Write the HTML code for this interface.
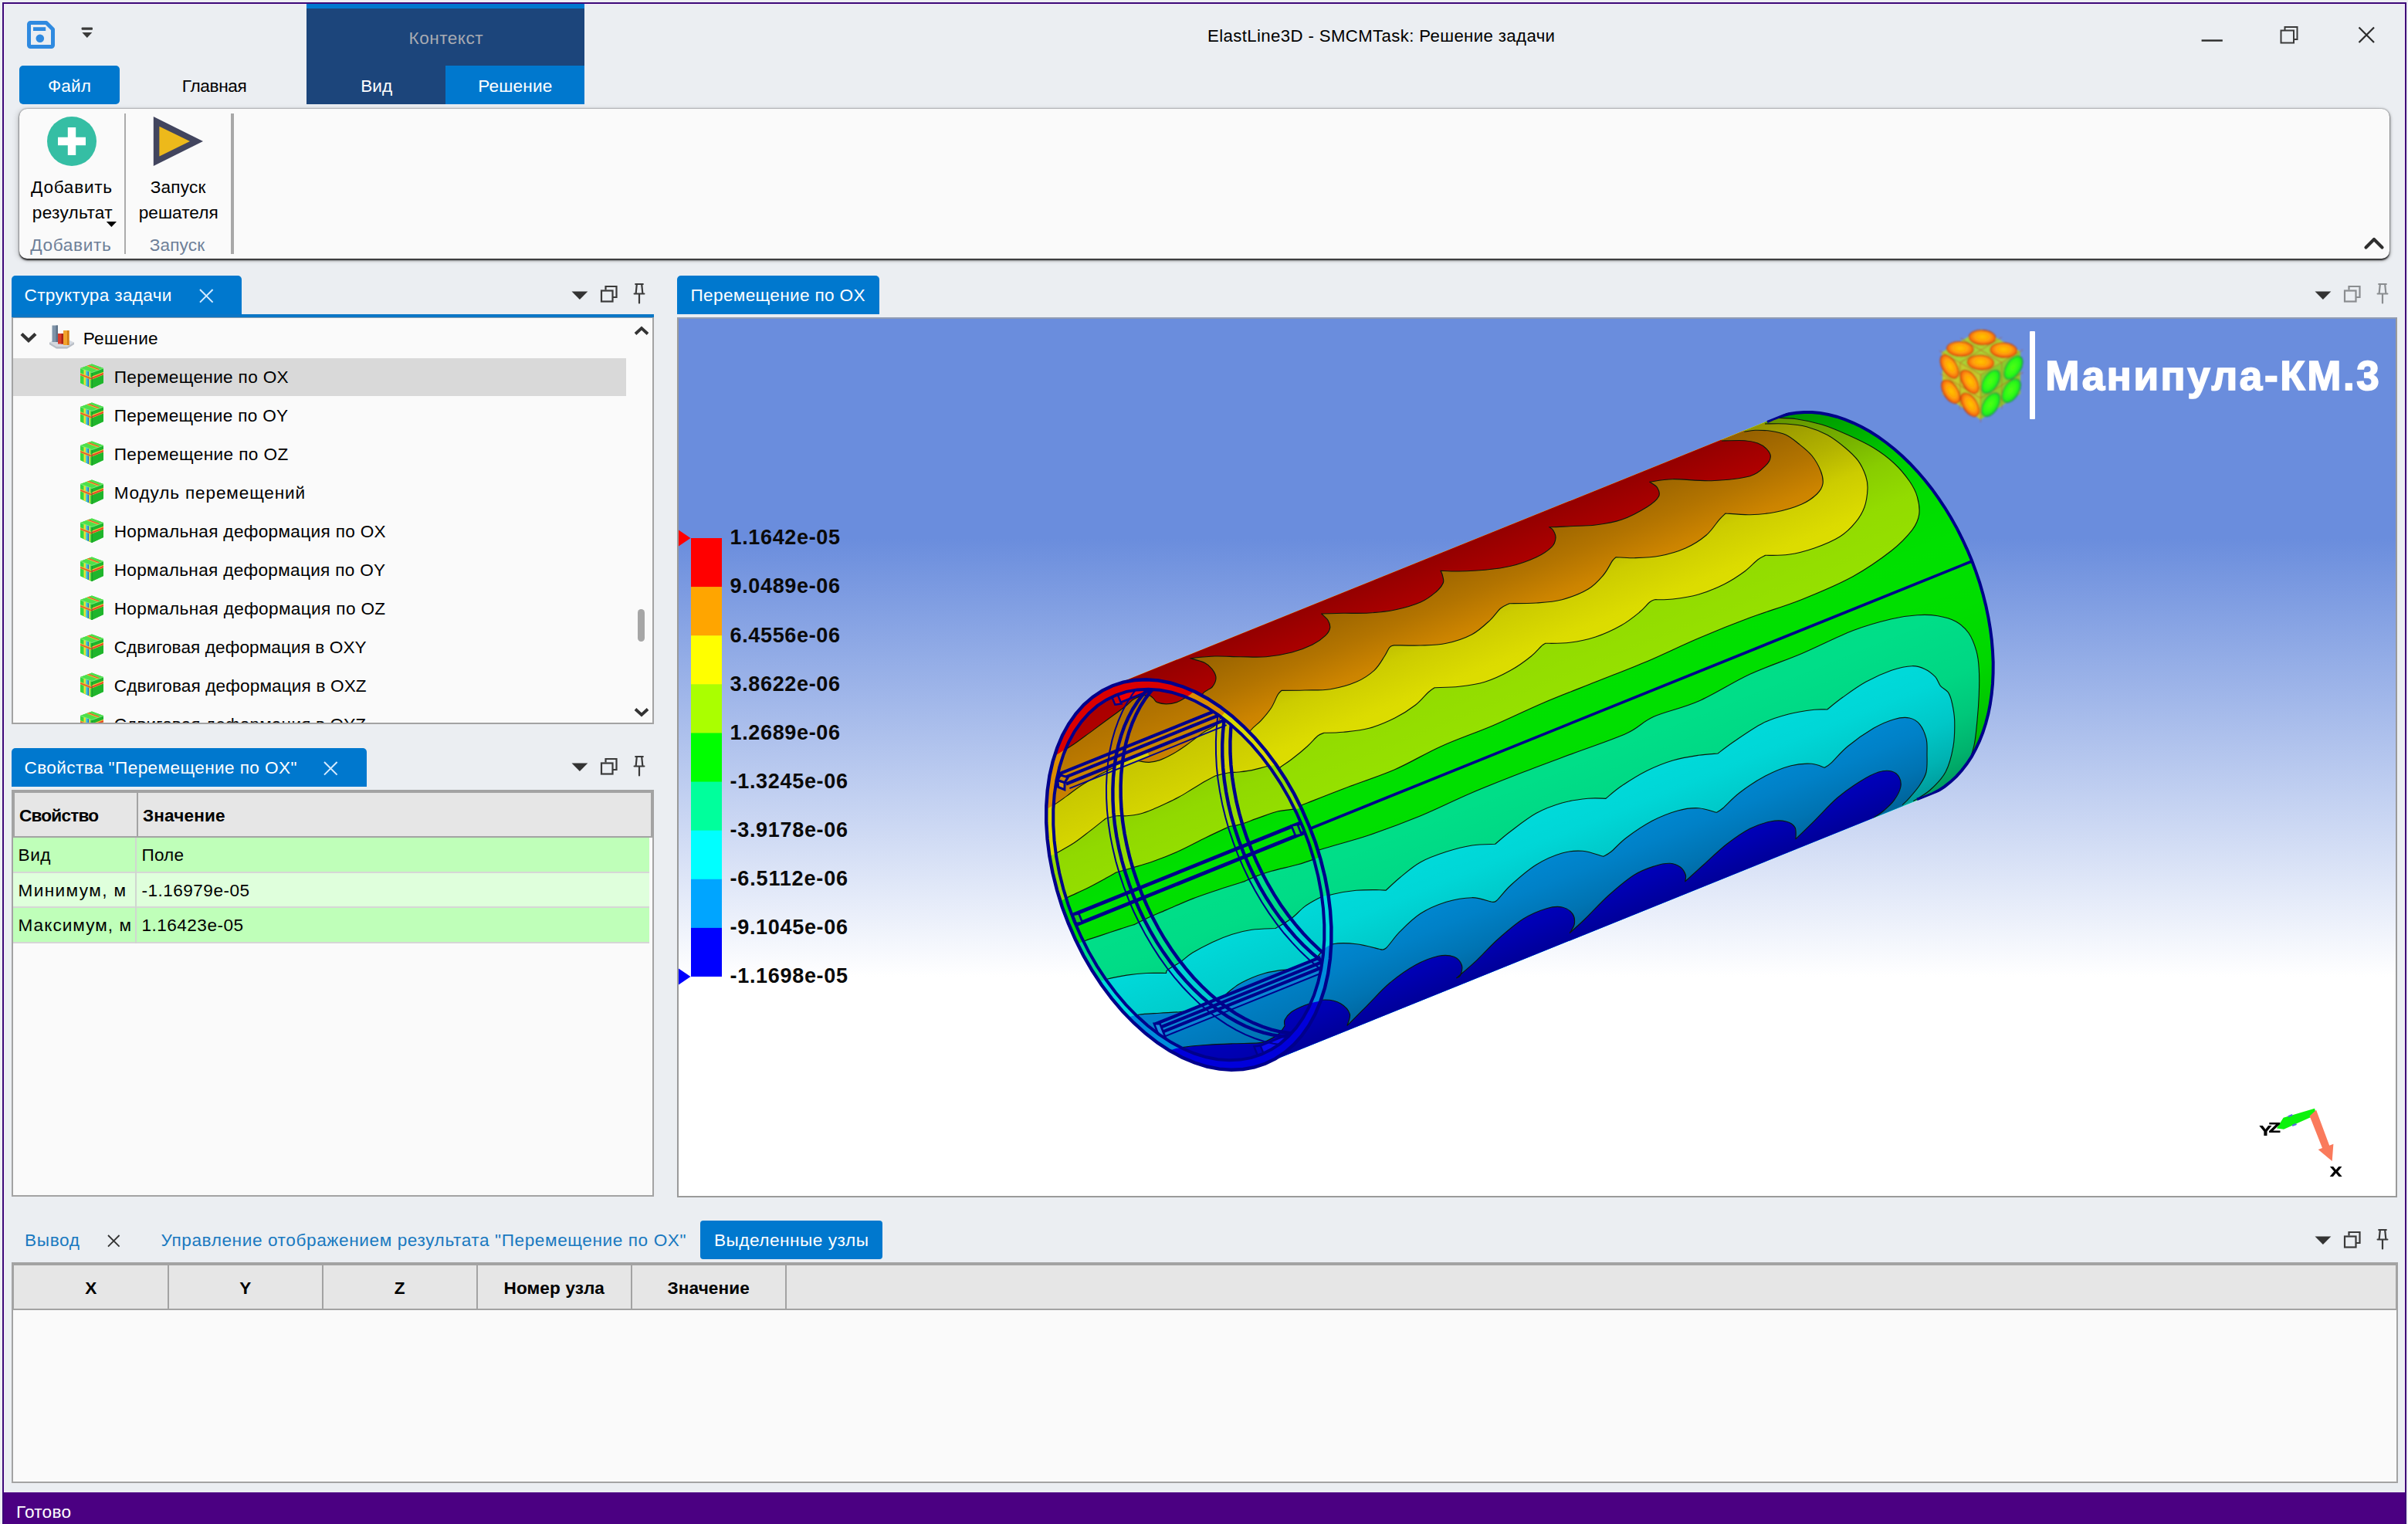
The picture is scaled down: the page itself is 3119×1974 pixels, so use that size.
<!DOCTYPE html>
<html lang="ru"><head><meta charset="utf-8"><title>ElastLine3D - SMCMTask: Решение задачи</title>
<style>
html,body{margin:0;padding:0;background:#eeeff4;}
body{width:3119px;height:1974px;font-family:"Liberation Sans",sans-serif;}
#app{position:relative;width:3119px;height:1974px;overflow:hidden;background:#eeeff4;}
#app div,#app svg,#app span.t{position:absolute;}
#app div{box-sizing:border-box;}
span.t{white-space:pre;line-height:40px;height:40px;}

</style></head>
<body>
<div id="app">
<!-- 10_frame.py -->
<div style="left:3px;top:3px;width:3114px;height:1971px;background:#ebeef2;border:2px solid #3c0a78;border-bottom:none;box-shadow:inset 1px 1px 0 #f6e6fa,inset -1px 0 0 #f6e6fa;"></div>
<div style="left:397px;top:5px;width:360px;height:130px;background:#1c457b;border-top:6px solid #0078ce;"></div>
<div style="left:577px;top:85px;width:180px;height:50px;background:#0078ce;"></div>
<span class="t" style="left:529.60px;top:29.86px;font-size:22.6px;color:#a8abb2;letter-spacing:0.478px;">Контекст</span>
<span class="t" style="left:467.20px;top:92.26px;font-size:22.6px;color:#fff;letter-spacing:0.062px;">Вид</span>
<span class="t" style="left:619.30px;top:92.26px;font-size:22.6px;color:#fff;letter-spacing:0.167px;">Решение</span>
<div style="left:25px;top:85px;width:130px;height:50px;background:#0078ce;border-radius:5px;"></div>
<span class="t" style="left:62.00px;top:92.26px;font-size:22.6px;color:#fff;letter-spacing:0.151px;">Файл</span>
<span class="t" style="left:235.80px;top:92.26px;font-size:22.6px;color:#000;letter-spacing:-0.333px;">Главная</span>
<svg style="left:30px;top:22px;" width="46" height="46" viewBox="0 0 46 46"><path d="M7.5 9.5a2 2 0 0 1 2-2h20.5l8.5 8.5v20.500a2 2 0 0 1-2 2h-27a2 2 0 0 1-2-2z" fill="none" stroke="#2f8ae0" stroke-width="5" stroke-linejoin="round"/><rect x="13" y="13.2" width="16.2" height="4.8" fill="#2f8ae0"/><circle cx="21.8" cy="27.8" r="5.3" fill="#2f8ae0"/></svg>
<svg style="left:100px;top:30px;" width="26" height="24" viewBox="0 0 26 24"><rect x="5.6" y="5.6" width="14.4" height="3.2" rx="1" fill="#3a3a3a"/><path d="M6.3 11.9h13l-6.500 7.100z" fill="#3a3a3a"/></svg>
<span class="t" style="left:1564.00px;top:26.86px;font-size:22.2px;color:#000;letter-spacing:0.383px;">ElastLine3D - SMCMTask: Решение задачи</span>
<svg style="left:2840px;top:24px;" width="250" height="44" viewBox="0 0 250 44"><rect x="11.600" y="27.300" width="27.200" height="2.400" fill="#2b2b2b"/><path d="M119.500 15.500v-4.500h16v16h-4.500" fill="none" stroke="#3a3a3a" stroke-width="2"/><rect x="114.500" y="15.500" width="16.500" height="16" fill="none" stroke="#3a3a3a" stroke-width="2"/><path d="M215.500 11.500l19.500 19.500M235 11.500l-19.500 19.500" fill="none" stroke="#2b2b2b" stroke-width="2.200"/></svg>
<div style="left:25px;top:141px;width:3070px;height:194px;background:#fafafa;border-radius:10px;box-shadow:0 1.500px 2px rgba(0,0,0,.78),1px 2px 4px rgba(0,0,0,.35),-3px 1px 7px rgba(0,0,0,.13),0 -1px 2px rgba(0,0,0,.16);"></div>
<svg style="left:59px;top:149px;" width="68" height="68" viewBox="0 0 68 68"><circle cx="34" cy="34" r="32" fill="#35bea4"/><path d="M28.800 16h10.400v12.800h12.800v10.400h-12.800v12.800h-10.400v-12.800h-12.800v-10.400h12.800z" fill="#fff"/></svg>
<svg style="left:196px;top:149px;" width="70" height="68" viewBox="0 0 70 68"><path d="M2.800 2l64.200 32l-64.200 32z" fill="#42455e"/><path d="M10.400 14.700l39.600 19.300l-39.600 19.400z" fill="#edb91b"/></svg>
<span class="t" style="left:40.10px;top:223.26px;font-size:22.6px;color:#000;letter-spacing:0.734px;">Добавить</span>
<span class="t" style="left:41.85px;top:255.66px;font-size:22.6px;color:#000;letter-spacing:0.306px;">результат</span>
<svg style="left:136px;top:285px;" width="18" height="12" viewBox="0 0 18 12"><path d="M1.800 2h13.200l-6.600 7z" fill="#000"/></svg>
<span class="t" style="left:39.15px;top:298.06px;font-size:22.6px;color:#6e8098;letter-spacing:0.692px;">Добавить</span>
<span class="t" style="left:194.75px;top:223.26px;font-size:22.6px;color:#000;letter-spacing:0.206px;">Запуск</span>
<span class="t" style="left:179.70px;top:255.66px;font-size:22.6px;color:#000;letter-spacing:0.049px;">решателя</span>
<span class="t" style="left:193.65px;top:298.06px;font-size:22.6px;color:#6e8098;letter-spacing:0.166px;">Запуск</span>
<div style="left:161px;top:147px;width:2px;height:182px;background:#ababab;"></div>
<div style="left:299px;top:147px;width:4px;height:182px;background:#a8a8a8;"></div>
<svg style="left:3058px;top:302px;" width="34" height="26" viewBox="0 0 34 26"><path d="M6.500 18.500l10.500-10.500l10.500 10.500" fill="none" stroke="#2e2e2e" stroke-width="4.200" stroke-linecap="round" stroke-linejoin="round"/></svg>
<div style="left:5px;top:1933px;width:3110px;height:41px;background:#4b0082;"></div>
<span class="t" style="left:21.00px;top:1938.76px;font-size:22.6px;color:#fff;letter-spacing:0.244px;">Готово</span>
<!-- 20_left.py -->
<svg width="0" height="0" style="left:0;top:0"><defs>
<linearGradient id="cgT" x1="0" y1="0" x2="1" y2="0"><stop offset="0" stop-color="#36d23c"/><stop offset="1" stop-color="#2fc636"/></linearGradient>
<symbol id="cube" viewBox="0 0 34 34">
 <path d="M17 1.500l15 5.500v19l-15 7l-15-7v-19z" fill="#2fd23a"/>
 <path d="M2 7l15 5.500v20.500l-15-7z" fill="#35d840"/>
 <path d="M17 12.500l15-5.500v19l-15 7z" fill="#1fb52c"/>
 <path d="M2 7l15-5.500l15 5.500l-15 5.500z" fill="#4fe04a"/>
 <path d="M6.500 8.700l2.800 1v19.800l-2.800-1.300z" fill="#e8e23a"/>
 <path d="M9.300 9.700l2.300 0.800v20l-2.300-1z" fill="#46c9e8"/>
 <path d="M11.600 10.500l1.800 0.700v20.100l-1.800-0.800z" fill="#2d6de0"/>
 <path d="M13.400 11.200l1.600 0.600v20.200l-1.600-0.700z" fill="#e8e23a"/>
 <path d="M17 17.500l15-5.800v3.800l-15 6.100z" fill="#f0c23a"/>
 <path d="M17 18.900l15-5.800v2l-15 6z" fill="#e6402c"/>
 <path d="M2 13l15 5.700v3.800l-15-6z" fill="#f0c23a" opacity=".85"/>
 <path d="M2 14.200l15 5.800v1.700l-15-6z" fill="#e6402c" opacity=".85"/>
 <path d="M10 4l14.500 5.600l3.200-1.200l-14.500-5.500z" fill="#f0c23a"/>
 <path d="M11.500 3.500l14.500 5.600l1.300-0.500l-14.500-5.500z" fill="#e6402c"/>
 <path d="M17 12.500v20.500" stroke="#177a22" stroke-width=".8" fill="none"/>
 <path d="M2 7l15 5.500l15-5.500" stroke="#8af08a" stroke-width=".8" fill="none"/>
</symbol>
<symbol id="icoTri" viewBox="0 0 24 14"><path d="M1.500 1.500h20.800l-10.400 10.600z" fill="#333"/></symbol>
<symbol id="icoRest" viewBox="0 0 24 24"><path d="M7.500 6.500v-4.500h14v14h-4.500" fill="none" stroke-width="2.200"/><rect x="2" y="7.500" width="14.500" height="14" fill="none" stroke-width="2.200"/></symbol>
<symbol id="icoPin" viewBox="0 0 20 28"><path d="M5.200 2h9.600M6.800 2.500l-1.200 12M13.200 2.500l1.200 12M3.600 14.500h12.800M10 15v11.500" fill="none" stroke-width="2.200" stroke-linecap="round"/></symbol>
</defs></svg>
<div style="left:15px;top:357px;width:298px;height:54px;background:#0078ce;border-radius:5px 5px 0 0;"></div>
<div style="left:15px;top:407px;width:832px;height:4.5px;background:#0a76c6;"></div>
<span class="t" style="left:31.50px;top:363.06px;font-size:22.6px;color:#fff;letter-spacing:0.330px;">Структура задачи</span>
<svg style="left:256.5px;top:372.9px;" width="20.6" height="20.6" viewBox="0 0 20.6 20.6"><path d="M2 2l16.6 16.6M18.6 2l-16.6 16.6" stroke="#d6ebff" stroke-width="2" fill="none"/></svg>
<svg style="left:739px;top:375.6px;" width="24" height="14" viewBox="0 0 24 14"><use href="#icoTri"/></svg><svg style="left:777.3px;top:369.3px;" width="24" height="24" viewBox="0 0 24 24"><use href="#icoRest" stroke="#3a3a3a"/></svg><svg style="left:817.5px;top:366.3px;" width="20" height="28" viewBox="0 0 20 28"><use href="#icoPin" stroke="#3a3a3a"/></svg>
<div style="left:15px;top:411px;width:832px;height:527px;background:#fafafa;border:2px solid #a3a3a3;border-top:1.500px solid #8f9fae;overflow:hidden;"></div>
<div style="left:17px;top:463.5px;width:794px;height:49px;background:#d9d9d9;"></div>
<svg style="left:24px;top:426px;" width="26" height="22" viewBox="0 0 26 22"><path d="M4 6.500l9 8.500l9-8.500" fill="none" stroke="#333" stroke-width="4.400" stroke-linejoin="miter"/></svg>
<svg style="left:62px;top:419px;" width="36" height="36" viewBox="0 0 36 36"><path d="M2 24.500l7-3.500h17l8 3.500v2.500l-9 5.500h-14l-9-5.500z" fill="#d4d8de"/><path d="M2 24.500l9 5.500h14l9-5.500v2.500l-9 5.500h-14l-9-5.500z" fill="#b9bec6"/><rect x="5.500" y="2.500" width="7.500" height="21.500" fill="#7f93a8"/><rect x="10.500" y="2.500" width="2.500" height="21.500" fill="#5f7388"/><rect x="13" y="13" width="7" height="13.500" fill="#d93a2a"/><rect x="17.500" y="13" width="2.500" height="13.500" fill="#a82218"/><rect x="20" y="9" width="7.500" height="19" fill="#f2a32c"/><rect x="25" y="9" width="2.500" height="19" fill="#d27d12"/></svg>
<span class="t" style="left:107.70px;top:418.96px;font-size:22.6px;color:#000;letter-spacing:0.333px;">Решение</span>
<div style="left:17px;top:412px;width:794px;height:524px;overflow:hidden;"><div style="left:-17px;top:-412px;width:900px;height:1000px;"><svg style="left:102px;top:469.9px;" width="34" height="34" viewBox="0 0 34 34"><use href="#cube"/></svg>
<span class="t" style="left:147.70px;top:468.96px;font-size:22.6px;color:#000;letter-spacing:0.337px;">Перемещение по OX</span>
<svg style="left:102px;top:519.9px;" width="34" height="34" viewBox="0 0 34 34"><use href="#cube"/></svg>
<span class="t" style="left:147.70px;top:518.96px;font-size:22.6px;color:#000;letter-spacing:0.306px;">Перемещение по OY</span>
<svg style="left:102px;top:569.9px;" width="34" height="34" viewBox="0 0 34 34"><use href="#cube"/></svg>
<span class="t" style="left:147.70px;top:568.96px;font-size:22.6px;color:#000;letter-spacing:0.385px;">Перемещение по OZ</span>
<svg style="left:102px;top:619.9px;" width="34" height="34" viewBox="0 0 34 34"><use href="#cube"/></svg>
<span class="t" style="left:147.70px;top:618.96px;font-size:22.6px;color:#000;letter-spacing:0.852px;">Модуль перемещений</span>
<svg style="left:102px;top:669.9px;" width="34" height="34" viewBox="0 0 34 34"><use href="#cube"/></svg>
<span class="t" style="left:147.70px;top:668.96px;font-size:22.6px;color:#000;letter-spacing:0.330px;">Нормальная деформация по OX</span>
<svg style="left:102px;top:719.9px;" width="34" height="34" viewBox="0 0 34 34"><use href="#cube"/></svg>
<span class="t" style="left:147.70px;top:718.96px;font-size:22.6px;color:#000;letter-spacing:0.311px;">Нормальная деформация по OY</span>
<svg style="left:102px;top:769.9px;" width="34" height="34" viewBox="0 0 34 34"><use href="#cube"/></svg>
<span class="t" style="left:147.70px;top:768.96px;font-size:22.6px;color:#000;letter-spacing:0.359px;">Нормальная деформация по OZ</span>
<svg style="left:102px;top:819.9px;" width="34" height="34" viewBox="0 0 34 34"><use href="#cube"/></svg>
<span class="t" style="left:147.70px;top:818.96px;font-size:22.6px;color:#000;letter-spacing:0.084px;">Сдвиговая деформация в OXY</span>
<svg style="left:102px;top:869.9px;" width="34" height="34" viewBox="0 0 34 34"><use href="#cube"/></svg>
<span class="t" style="left:147.70px;top:868.96px;font-size:22.6px;color:#000;letter-spacing:0.134px;">Сдвиговая деформация в OXZ</span>
<svg style="left:102px;top:919.9px;" width="34" height="34" viewBox="0 0 34 34"><use href="#cube"/></svg>
<span class="t" style="left:147.70px;top:918.96px;font-size:22.6px;color:#000;letter-spacing:0.114px;">Сдвиговая деформация в OYZ</span></div></div>
<svg style="left:818px;top:419px;" width="26" height="20" viewBox="0 0 26 20"><path d="M5 13.500l8-7.500l8 7.500" fill="none" stroke="#333" stroke-width="3.800"/></svg>
<svg style="left:818px;top:913px;" width="26" height="20" viewBox="0 0 26 20"><path d="M5 5.500l8 7.500l8-7.500" fill="none" stroke="#333" stroke-width="3.800"/></svg>
<div style="left:825.5px;top:789px;width:9.5px;height:42px;background:#a6a6a6;border-radius:4.500px;"></div>
<div style="left:15px;top:969px;width:460px;height:50px;background:#0078ce;border-radius:5px 5px 0 0;"></div>
<span class="t" style="left:31.50px;top:974.86px;font-size:22.6px;color:#fff;letter-spacing:0.402px;">Свойства "Перемещение по OX"</span>
<svg style="left:418.2px;top:984.7px;" width="20.6" height="20.6" viewBox="0 0 20.6 20.6"><path d="M2 2l16.6 16.6M18.6 2l-16.6 16.6" stroke="#d6ebff" stroke-width="2" fill="none"/></svg>
<svg style="left:739px;top:987.3px;" width="24" height="14" viewBox="0 0 24 14"><use href="#icoTri"/></svg><svg style="left:777.3px;top:981px;" width="24" height="24" viewBox="0 0 24 24"><use href="#icoRest" stroke="#3a3a3a"/></svg><svg style="left:817.5px;top:978px;" width="20" height="28" viewBox="0 0 20 28"><use href="#icoPin" stroke="#3a3a3a"/></svg>
<div style="left:15px;top:1023px;width:832px;height:527px;background:#fafafa;border:2px solid #a3a3a3;"></div>
<div style="left:15px;top:1023px;width:832px;height:62px;background:#e6e6e6;border:4px solid #a3a3a3;border-bottom-width:2px;"></div>
<div style="left:176.5px;top:1026px;width:2.5px;height:57px;background:#a3a3a3;"></div>
<span class="t" style="left:25.00px;top:1037.06px;font-size:22.6px;color:#000;font-weight:700;letter-spacing:-0.804px;">Свойство</span>
<span class="t" style="left:185.00px;top:1037.06px;font-size:22.6px;color:#000;font-weight:700;letter-spacing:0.129px;">Значение</span>
<div style="left:17px;top:1085px;width:824px;height:44px;background:#bfffb9;"></div>
<div style="left:17px;top:1128.5px;width:824px;height:2.2px;background:#d6d6d6;"></div>
<div style="left:174.5px;top:1085px;width:2px;height:45.7px;background:#d0d6d0;"></div>
<span class="t" style="left:23.50px;top:1087.96px;font-size:22.6px;color:#000;letter-spacing:0.562px;">Вид</span>
<span class="t" style="left:183.50px;top:1087.96px;font-size:22.6px;color:#000;letter-spacing:0.146px;">Поле</span>
<div style="left:17px;top:1130.7px;width:824px;height:44px;background:#dfffdc;"></div>
<div style="left:17px;top:1174.2px;width:824px;height:2.2px;background:#d6d6d6;"></div>
<div style="left:174.5px;top:1130.7px;width:2px;height:45.7px;background:#d0d6d0;"></div>
<span class="t" style="left:23.50px;top:1133.66px;font-size:22.6px;color:#000;letter-spacing:1.389px;">Минимум, м</span>
<span class="t" style="left:183.50px;top:1133.66px;font-size:22.6px;color:#000;letter-spacing:0.462px;">-1.16979e-05</span>
<div style="left:17px;top:1176.4px;width:824px;height:44px;background:#bfffb9;"></div>
<div style="left:17px;top:1219.9px;width:824px;height:2.2px;background:#d6d6d6;"></div>
<div style="left:174.5px;top:1176.4px;width:2px;height:45.7px;background:#d0d6d0;"></div>
<span class="t" style="left:23.50px;top:1179.36px;font-size:22.6px;color:#000;letter-spacing:1.034px;">Максимум, м</span>
<span class="t" style="left:183.50px;top:1179.36px;font-size:22.6px;color:#000;letter-spacing:0.459px;">1.16423e-05</span>
<!-- 30_view.py -->
<div style="left:877px;top:357px;width:262px;height:50px;background:#0078ce;border-radius:5px 5px 0 0;"></div>
<span class="t" style="left:894.50px;top:362.76px;font-size:22.6px;color:#fff;letter-spacing:0.337px;">Перемещение по OX</span>
<svg style="left:2997px;top:375.6px;" width="24" height="14" viewBox="0 0 24 14"><use href="#icoTri"/></svg><svg style="left:3035.3px;top:369.3px;" width="24" height="24" viewBox="0 0 24 24"><use href="#icoRest" stroke="#8a8d90"/></svg><svg style="left:3075.5px;top:366.3px;" width="20" height="28" viewBox="0 0 20 28"><use href="#icoPin" stroke="#8a8d90"/></svg>
<div style="left:877px;top:411px;width:2228px;height:1140px;background:linear-gradient(#6a8ddd 0,#6a8ddd 25%,#fff 75%,#fff 100%);border:2px solid #9a9a9a;border-top-color:#8f9bb5;"></div>
<svg style="left:1300px;top:480px" width="1340" height="960" viewBox="1300 480 1340 960">
<defs>
<clipPath id="cyOuter"><path d="M1440.9 888.2L2298.1 541.9L2308.5 538.3L2319.3 535.8L2330.4 534.3L2341.8 533.9L2353.5 534.6L2365.3 536.4L2377.3 539.3L2389.4 543.2L2401.4 548.1L2413.5 554.1L2425.5 561.1L2437.4 569.0L2449.1 577.9L2460.6 587.6L2471.8 598.3L2482.7 609.7L2493.2 621.9L2503.3 634.8L2513.0 648.3L2522.1 662.4L2530.7 677.1L2538.8 692.2L2546.2 707.8L2553.0 723.6L2559.2 739.8L2564.6 756.1L2569.3 772.6L2573.3 789.1L2576.5 805.7L2579.0 822.1L2580.7 838.4L2581.6 854.5L2581.7 870.2L2581.0 885.7L2579.5 900.7L2577.3 915.2L2574.2 929.1L2570.4 942.5L2565.9 955.2L2560.7 967.1L2554.7 978.3L2548.1 988.7L2540.8 998.2L2532.9 1006.8L2524.4 1014.4L2515.4 1021.1L2505.9 1026.8L2495.9 1031.5L1638.7 1377.8Z"/></clipPath>
<clipPath id="cyFront"><path d="M1695.8 1070.0L1703.9 1091.5L1710.6 1113.4L1716.1 1135.5L1720.3 1157.5L1723.0 1179.3L1724.4 1200.8L1724.3 1221.8L1722.9 1242.0L1720.1 1261.5L1715.9 1280.0L1710.3 1297.3L1703.5 1313.5L1695.4 1328.2L1686.1 1341.5L1675.7 1353.1L1664.3 1363.1L1651.9 1371.4L1638.7 1377.8L1624.7 1382.3L1610.1 1385.0L1594.9 1385.8L1579.4 1384.6L1563.5 1381.5L1547.4 1376.5L1531.3 1369.7L1515.3 1361.0L1499.4 1350.7L1483.8 1338.6L1468.7 1325.0L1454.1 1310.0L1440.2 1293.6L1427.0 1276.0L1414.7 1257.3L1403.3 1237.6L1393.0 1217.1L1383.8 1196.0L1375.7 1174.5L1369.0 1152.6L1363.5 1130.5L1359.3 1108.5L1356.6 1086.7L1355.2 1065.2L1355.3 1044.2L1356.7 1024.0L1359.5 1004.5L1363.7 986.0L1369.3 968.7L1376.1 952.5L1384.2 937.8L1393.5 924.5L1403.9 912.9L1415.3 902.9L1427.7 894.6L1440.9 888.2L1454.9 883.7L1469.5 881.0L1484.7 880.2L1500.2 881.4L1516.1 884.5L1532.2 889.5L1548.3 896.3L1564.3 905.0L1580.2 915.3L1595.8 927.4L1610.9 941.0L1625.5 956.0L1639.4 972.4L1652.6 990.0L1664.9 1008.7L1676.3 1028.4L1686.6 1048.9L1695.8 1070.0Z"/></clipPath>
<clipPath id="cyRim"><path d="M1440.7 887.7L2297.9 541.3L2668.7 391.5L2867.0 882.2L2496.1 1032.0L1638.9 1378.3Z"/></clipPath>
<linearGradient id="cyShade" gradientUnits="userSpaceOnUse" x1="1440.9" y1="888.2" x2="1638.7" y2="1377.8"><stop offset="0" stop-color="#000" stop-opacity="0.42"/><stop offset="0.06" stop-color="#000" stop-opacity="0.36"/><stop offset="0.12" stop-color="#000" stop-opacity="0.3"/><stop offset="0.2" stop-color="#000" stop-opacity="0.2"/><stop offset="0.3" stop-color="#000" stop-opacity="0.14"/><stop offset="0.45" stop-color="#000" stop-opacity="0.12"/><stop offset="0.6" stop-color="#000" stop-opacity="0.13"/><stop offset="0.75" stop-color="#000" stop-opacity="0.16"/><stop offset="0.85" stop-color="#000" stop-opacity="0.22"/><stop offset="0.93" stop-color="#000" stop-opacity="0.3"/><stop offset="1" stop-color="#000" stop-opacity="0.4"/></linearGradient>
<linearGradient id="cyShadeIn" gradientUnits="userSpaceOnUse" x1="1440.9" y1="888.2" x2="1638.7" y2="1377.8"><stop offset="0" stop-color="#000" stop-opacity="0.36"/><stop offset="0.1" stop-color="#000" stop-opacity="0.3"/><stop offset="0.2" stop-color="#000" stop-opacity="0.22"/><stop offset="0.35" stop-color="#000" stop-opacity="0.15"/><stop offset="0.5" stop-color="#000" stop-opacity="0.12"/><stop offset="0.65" stop-color="#000" stop-opacity="0.14"/><stop offset="0.8" stop-color="#000" stop-opacity="0.2"/><stop offset="0.9" stop-color="#000" stop-opacity="0.27"/><stop offset="1" stop-color="#000" stop-opacity="0.34"/></linearGradient>
<clipPath id="cyFrontIn"><path d="M1688.2 1073.1L1695.8 1093.6L1702.2 1114.4L1707.4 1135.3L1711.4 1156.3L1714.0 1177.0L1715.3 1197.5L1715.3 1217.4L1713.9 1236.7L1711.2 1255.2L1707.2 1272.7L1701.9 1289.3L1695.4 1304.6L1687.7 1318.6L1678.9 1331.2L1669.0 1342.3L1658.2 1351.8L1646.4 1359.6L1633.8 1365.7L1620.5 1370.1L1606.6 1372.6L1592.2 1373.3L1577.4 1372.2L1562.3 1369.3L1547.0 1364.5L1531.7 1358.0L1516.5 1349.8L1501.4 1339.9L1486.6 1328.5L1472.2 1315.6L1458.3 1301.3L1445.1 1285.7L1432.5 1268.9L1420.8 1251.1L1410.0 1232.4L1400.2 1213.0L1391.4 1192.9L1383.8 1172.4L1377.4 1151.6L1372.2 1130.7L1368.2 1109.7L1365.6 1089.0L1364.3 1068.5L1364.3 1048.6L1365.7 1029.3L1368.4 1010.8L1372.4 993.3L1377.7 976.7L1384.2 961.4L1391.9 947.4L1400.7 934.8L1410.6 923.7L1421.4 914.2L1433.2 906.4L1445.8 900.3L1459.1 895.9L1473.0 893.4L1487.4 892.7L1502.2 893.8L1517.3 896.7L1532.6 901.5L1547.9 908.0L1563.1 916.2L1578.2 926.1L1593.0 937.5L1607.4 950.4L1621.3 964.7L1634.5 980.3L1647.1 997.1L1658.8 1014.9L1669.6 1033.6L1679.4 1053.0L1688.2 1073.1Z"/></clipPath>
</defs>
<g clip-path="url(#cyOuter)">
<path d="M1440.9 888.2L2298.1 541.9L2308.5 538.3L2319.3 535.8L2330.4 534.3L2341.8 533.9L2353.5 534.6L2365.3 536.4L2377.3 539.3L2389.4 543.2L2401.4 548.1L2413.5 554.1L2425.5 561.1L2437.4 569.0L2449.1 577.9L2460.6 587.6L2471.8 598.3L2482.7 609.7L2493.2 621.9L2503.3 634.8L2513.0 648.3L2522.1 662.4L2530.7 677.1L2538.8 692.2L2546.2 707.8L2553.0 723.6L2559.2 739.8L2564.6 756.1L2569.3 772.6L2573.3 789.1L2576.5 805.7L2579.0 822.1L2580.7 838.4L2581.6 854.5L2581.7 870.2L2581.0 885.7L2579.5 900.7L2577.3 915.2L2574.2 929.1L2570.4 942.5L2565.9 955.2L2560.7 967.1L2554.7 978.3L2548.1 988.7L2540.8 998.2L2532.9 1006.8L2524.4 1014.4L2515.4 1021.1L2505.9 1026.8L2495.9 1031.5L1638.7 1377.8Z" fill="#00ff00"/>
<path d="M1428.5 1178.0L1660.0 1053.3C1665.6 1051.1 1680.0 1045.3 1693.3 1040.0C1706.7 1034.7 1721.1 1028.9 1740.0 1021.7C1758.9 1014.4 1785.6 1005.8 1806.7 996.7C1827.8 987.5 1845.6 976.1 1866.7 966.7C1887.8 957.2 1911.1 949.4 1933.3 940.0C1955.6 930.6 1977.8 919.4 2000.0 910.0C2022.2 900.6 2044.4 892.2 2066.7 883.3C2088.9 874.4 2111.1 866.1 2133.3 856.7C2155.6 847.2 2177.8 836.1 2200.0 826.7C2222.2 817.2 2244.4 808.3 2266.7 800.0C2288.9 791.7 2311.1 785.6 2333.3 776.7C2355.6 767.8 2380.6 757.2 2400.0 746.7C2419.4 736.1 2437.2 723.3 2450.0 713.3C2462.8 703.3 2470.7 694.4 2476.7 686.7C2482.6 678.9 2484.6 673.9 2485.7 666.7C2486.8 659.4 2485.4 650.6 2483.3 643.3C2481.3 636.1 2478.3 630.6 2473.3 623.3C2468.3 616.1 2461.1 607.2 2453.3 600.0C2445.6 592.8 2436.7 586.1 2426.7 580.0C2416.7 573.9 2404.4 568.3 2393.3 563.3C2382.2 558.3 2371.1 553.4 2360.0 550.0C2348.9 546.6 2336.7 544.1 2326.7 542.7C2316.7 541.2 2304.4 541.6 2300.0 541.3L2298.3 529.1L2500.7 -225.9L1017.2 373.5Z" fill="#aaff00"/>
<path d="M1428.5 1178.0L1633.3 1013.3C1637.2 1010.3 1650.0 1000.0 1656.7 995.0C1663.3 990.0 1667.2 988.1 1673.3 983.3C1679.4 978.6 1687.8 971.7 1693.3 966.7C1698.9 961.7 1703.1 956.2 1706.7 953.3C1710.3 950.4 1713.6 950.0 1715.0 949.3C1719.2 949.2 1730.3 949.3 1740.0 948.3C1749.7 947.3 1762.2 946.4 1773.3 943.3C1784.4 940.3 1796.7 935.0 1806.7 930.0C1816.7 925.0 1826.1 918.9 1833.3 913.3C1840.6 907.8 1845.8 900.4 1850.0 896.7C1854.2 892.9 1856.9 891.7 1858.3 890.7C1863.6 890.4 1879.2 890.6 1890.0 889.3C1900.8 888.1 1912.2 886.8 1923.3 883.3C1934.4 879.8 1946.7 873.9 1956.7 868.3C1966.7 862.8 1976.7 855.3 1983.3 850.0C1990.0 844.7 1993.6 839.4 1996.7 836.7C1999.7 833.9 2000.8 833.9 2001.7 833.3C2006.9 833.2 2022.5 833.7 2033.3 832.3C2044.2 830.9 2055.6 828.7 2066.7 825.0C2077.8 821.3 2090.6 815.3 2100.0 810.0C2109.4 804.7 2117.2 798.3 2123.3 793.3C2129.4 788.3 2133.3 782.8 2136.7 780.0C2140.0 777.2 2142.2 777.2 2143.3 776.7C2147.2 776.6 2157.2 777.1 2166.7 776.0C2176.1 774.9 2188.9 773.2 2200.0 770.0C2211.1 766.8 2223.3 761.7 2233.3 756.7C2243.3 751.7 2252.8 745.3 2260.0 740.0C2267.2 734.7 2272.2 728.4 2276.7 725.0C2281.1 721.6 2285.0 720.3 2286.7 719.3C2291.7 719.2 2306.1 719.9 2316.7 718.3C2327.2 716.8 2338.9 713.9 2350.0 710.0C2361.1 706.1 2374.4 700.6 2383.3 695.0C2392.2 689.4 2398.1 683.1 2403.3 676.7C2408.6 670.3 2412.4 663.9 2415.0 656.7C2417.6 649.4 2418.7 640.0 2419.0 633.3C2419.3 626.7 2418.7 622.8 2416.7 616.7C2414.6 610.6 2411.1 602.8 2406.7 596.7C2402.2 590.6 2396.7 585.6 2390.0 580.0C2383.3 574.4 2375.0 567.9 2366.7 563.3C2358.3 558.8 2348.9 555.1 2340.0 552.7C2331.1 550.3 2322.3 549.6 2313.3 549.0C2304.3 548.4 2290.6 549.0 2286.0 549.0L2284.3 536.7L2500.7 -225.9L1017.2 373.5Z" fill="#ffff00"/>
<path d="M1428.5 1178.0L1600.0 973.3C1603.3 968.8 1614.4 952.7 1620.0 946.0C1625.6 939.3 1628.9 938.2 1633.3 933.3C1637.8 928.4 1643.1 922.2 1646.7 916.7C1650.3 911.1 1652.8 903.7 1655.0 900.0C1657.2 896.3 1659.2 895.3 1660.0 894.3C1665.0 894.3 1679.4 894.3 1690.0 894.0C1700.6 893.7 1712.2 894.4 1723.3 892.7C1734.4 890.9 1747.2 887.4 1756.7 883.3C1766.1 879.3 1773.9 873.9 1780.0 868.3C1786.1 862.8 1790.0 855.0 1793.3 850.0C1796.7 845.0 1797.8 840.7 1800.0 838.3C1802.2 835.9 1805.6 836.1 1806.7 835.7C1812.2 835.7 1828.9 836.4 1840.0 836.0C1851.1 835.6 1862.2 835.7 1873.3 833.3C1884.4 830.9 1897.2 826.7 1906.7 821.7C1916.1 816.7 1923.9 808.9 1930.0 803.3C1936.1 797.8 1939.2 791.9 1943.3 788.3C1947.5 784.7 1953.1 782.8 1955.0 781.7C1960.8 781.6 1978.6 781.8 1990.0 781.0C2001.4 780.2 2012.2 779.6 2023.3 776.7C2034.4 773.7 2047.8 768.6 2056.7 763.3C2065.6 758.1 2071.4 751.1 2076.7 745.0C2081.9 738.9 2085.6 730.6 2088.3 726.7C2091.1 722.8 2092.5 722.5 2093.3 721.7C2097.2 721.8 2107.2 722.9 2116.7 722.7C2126.1 722.4 2138.9 722.1 2150.0 720.0C2161.1 717.9 2173.3 714.4 2183.3 710.0C2193.3 705.6 2202.8 699.4 2210.0 693.3C2217.2 687.2 2222.5 678.1 2226.7 673.3C2230.8 668.6 2233.6 666.4 2235.0 665.0C2240.3 665.3 2255.8 666.9 2266.7 666.7C2277.5 666.4 2288.9 665.6 2300.0 663.3C2311.1 661.1 2324.4 657.2 2333.3 653.3C2342.2 649.4 2348.7 644.4 2353.3 640.0C2357.9 635.6 2360.2 631.7 2361.0 626.7C2361.8 621.7 2360.7 616.1 2358.3 610.0C2355.9 603.9 2351.4 595.8 2346.7 590.0C2341.9 584.2 2335.6 579.4 2330.0 575.0C2324.4 570.6 2319.4 566.1 2313.3 563.3C2307.2 560.6 2300.0 559.3 2293.3 558.3C2286.7 557.3 2279.0 557.2 2273.3 557.3C2267.7 557.5 2261.7 559.0 2259.3 559.3L2257.6 547.1L2500.7 -225.9L1017.2 373.5Z" fill="#ffa500"/>
<path d="M1428.5 1178.0L1540.0 933.3C1542.8 927.8 1551.7 907.2 1556.7 900.0C1561.7 892.8 1566.9 893.6 1570.0 890.0C1573.1 886.4 1575.0 882.2 1575.0 878.3C1575.0 874.4 1572.5 870.0 1570.0 866.7C1567.5 863.3 1564.7 860.7 1560.0 858.3C1555.3 856.0 1544.7 853.6 1541.7 852.7C1546.9 852.2 1562.5 850.3 1573.3 850.0C1584.2 849.7 1595.6 850.6 1606.7 850.7C1617.8 850.8 1628.9 851.6 1640.0 850.7C1651.1 849.7 1663.3 847.6 1673.3 845.0C1683.3 842.4 1692.8 838.6 1700.0 835.0C1707.2 831.4 1712.9 826.9 1716.7 823.3C1720.4 819.7 1722.1 816.7 1722.7 813.3C1723.2 810.0 1721.8 806.4 1720.0 803.3C1718.2 800.3 1713.1 796.4 1711.7 795.0C1716.4 794.9 1729.7 794.5 1740.0 794.3C1750.3 794.2 1762.2 794.7 1773.3 794.0C1784.4 793.3 1795.6 792.3 1806.7 790.0C1817.8 787.7 1831.1 783.9 1840.0 780.0C1848.9 776.1 1855.1 770.8 1860.0 766.7C1864.9 762.5 1867.9 758.6 1869.3 755.0C1870.7 751.4 1868.9 747.6 1868.3 745.0C1867.8 742.4 1866.4 740.3 1866.0 739.3C1870.0 739.4 1880.4 740.2 1890.0 740.0C1899.6 739.8 1912.2 739.4 1923.3 738.3C1934.4 737.2 1945.6 736.1 1956.7 733.3C1967.8 730.6 1981.1 725.8 1990.0 721.7C1998.9 717.5 2005.8 712.5 2010.0 708.3C2014.2 704.2 2014.7 700.3 2015.0 696.7C2015.3 693.1 2013.1 689.0 2011.7 686.7C2010.3 684.3 2007.5 683.3 2006.7 682.7C2011.1 683.1 2023.3 682.2 2033.3 681.7C2043.3 681.1 2055.6 681.4 2066.7 680.0C2077.8 678.6 2088.9 677.2 2100.0 673.3C2111.1 669.4 2125.3 661.7 2133.3 656.7C2141.4 651.7 2146.1 647.5 2148.3 643.3C2150.6 639.2 2148.6 634.8 2146.7 631.7C2144.7 628.5 2138.3 625.6 2136.7 624.3C2141.7 623.7 2153.3 620.9 2166.7 620.7C2180.0 620.4 2200.0 623.3 2216.7 622.7C2233.3 622.0 2255.0 619.9 2266.7 616.7C2278.3 613.4 2282.2 607.5 2286.7 603.3C2291.1 599.2 2293.1 595.3 2293.3 591.7C2293.6 588.1 2291.1 584.6 2288.3 581.7C2285.6 578.7 2281.4 575.8 2276.7 574.0C2271.9 572.2 2267.8 571.2 2260.0 570.7C2252.2 570.2 2235.0 570.9 2230.0 571.0L2228.3 558.7L2500.7 -225.9L1017.2 373.5Z" fill="#ff0000"/>
<path d="M1428.5 1178.0L1673.3 1113.3C1679.7 1111.1 1695.0 1105.3 1711.7 1100.0C1728.3 1094.7 1751.9 1088.9 1773.3 1081.7C1794.7 1074.4 1817.8 1065.8 1840.0 1056.7C1862.2 1047.5 1884.4 1036.1 1906.7 1026.7C1928.9 1017.2 1951.1 1008.6 1973.3 1000.0C1995.6 991.4 2017.8 983.3 2040.0 975.0C2062.2 966.7 2089.7 957.8 2106.7 950.0C2123.7 942.2 2126.4 935.3 2142.0 928.3C2157.6 921.4 2179.2 917.5 2200.0 908.3C2220.8 899.2 2244.4 883.6 2266.7 873.3C2288.9 863.1 2311.1 856.1 2333.3 846.7C2355.6 837.2 2380.6 824.2 2400.0 816.7C2419.4 809.2 2436.1 805.0 2450.0 801.7C2463.9 798.3 2473.3 797.3 2483.3 796.7C2493.3 796.0 2501.7 796.3 2510.0 797.7C2518.3 799.1 2526.7 801.3 2533.3 805.0C2540.0 808.7 2545.6 813.6 2550.0 820.0C2554.4 826.4 2557.8 835.6 2560.0 843.3C2562.2 851.1 2562.8 857.2 2563.3 866.7C2563.9 876.1 2563.7 888.9 2563.3 900.0C2562.9 911.1 2562.1 922.2 2561.0 933.3C2559.9 944.4 2559.1 956.7 2556.7 966.7C2554.3 976.7 2551.7 985.0 2546.7 993.3C2541.7 1001.7 2533.9 1010.3 2526.7 1016.7C2519.4 1023.1 2510.0 1028.2 2503.3 1031.7C2496.7 1035.1 2489.4 1036.4 2486.7 1037.3L2493.9 1047.3L3175.0 1443.0L1691.5 2042.4Z" fill="#00ff9c"/>
<path d="M1428.5 1178.0L1690.0 1170.0C1696.1 1168.1 1715.6 1161.1 1726.7 1158.3C1737.8 1155.6 1746.7 1154.3 1756.7 1153.3C1766.7 1152.4 1780.3 1152.7 1786.7 1152.7C1793.1 1152.7 1793.6 1153.2 1795.0 1153.3C1798.1 1150.6 1805.8 1142.8 1813.3 1136.7C1820.8 1130.6 1830.0 1122.2 1840.0 1116.7C1850.0 1111.1 1862.2 1106.9 1873.3 1103.3C1884.4 1099.7 1896.1 1096.7 1906.7 1095.0C1917.2 1093.3 1931.7 1093.6 1936.7 1093.3C1940.0 1090.6 1947.8 1083.3 1956.7 1076.7C1965.6 1070.0 1978.9 1059.4 1990.0 1053.3C2001.1 1047.2 2012.2 1043.2 2023.3 1040.0C2034.4 1036.8 2047.2 1035.3 2056.7 1034.3C2066.1 1033.4 2076.1 1034.3 2080.0 1034.3C2083.3 1031.7 2091.1 1024.3 2100.0 1018.3C2108.9 1012.3 2122.2 1003.9 2133.3 998.3C2144.4 992.8 2155.6 988.3 2166.7 985.0C2177.8 981.7 2190.3 979.8 2200.0 978.3C2209.7 976.8 2220.8 976.4 2225.0 976.0C2228.6 973.3 2236.9 966.6 2246.7 960.0C2256.4 953.4 2271.7 942.5 2283.3 936.7C2295.0 930.8 2305.6 927.9 2316.7 925.0C2327.8 922.1 2341.7 920.3 2350.0 919.3C2358.3 918.3 2363.9 919.1 2366.7 919.0C2370.0 916.4 2378.3 909.3 2386.7 903.3C2395.0 897.4 2406.1 889.2 2416.7 883.3C2427.2 877.5 2440.0 871.8 2450.0 868.3C2460.0 864.9 2469.4 862.9 2476.7 862.7C2483.9 862.4 2488.3 864.3 2493.3 866.7C2498.3 869.0 2503.3 873.1 2506.7 876.7C2510.0 880.3 2510.6 885.0 2513.3 888.3C2516.1 891.7 2520.8 893.1 2523.3 896.7C2525.8 900.3 2526.9 903.9 2528.3 910.0C2529.7 916.1 2531.4 923.9 2531.7 933.3C2531.9 942.8 2531.9 955.6 2530.0 966.7C2528.1 977.8 2525.0 990.6 2520.0 1000.0C2515.0 1009.4 2506.9 1017.1 2500.0 1023.3C2493.1 1029.6 2481.9 1035.3 2478.3 1037.7L2485.6 1047.7L3175.0 1443.0L1691.5 2042.4Z" fill="#00ffff"/>
<path d="M1428.5 1178.0L1693.3 1233.3C1698.9 1231.6 1716.1 1224.4 1726.7 1222.7C1737.2 1220.9 1746.7 1221.6 1756.7 1222.7C1766.7 1223.8 1781.7 1228.2 1786.7 1229.3C1788.1 1229.2 1790.6 1232.1 1795.0 1228.3C1799.4 1224.6 1805.8 1214.2 1813.3 1206.7C1820.8 1199.2 1830.0 1189.7 1840.0 1183.3C1850.0 1176.9 1862.2 1171.8 1873.3 1168.3C1884.4 1164.9 1897.2 1162.8 1906.7 1162.7C1916.1 1162.6 1926.1 1166.8 1930.0 1167.7C1931.4 1167.5 1933.9 1170.2 1938.3 1166.7C1942.8 1163.2 1948.1 1154.4 1956.7 1146.7C1965.3 1138.9 1978.9 1126.9 1990.0 1120.0C2001.1 1113.1 2013.3 1107.9 2023.3 1105.0C2033.3 1102.1 2041.1 1101.6 2050.0 1102.3C2058.9 1103.1 2072.2 1108.2 2076.7 1109.3C2078.3 1108.3 2081.7 1107.4 2086.7 1103.3C2091.7 1099.3 2097.8 1091.7 2106.7 1085.0C2115.6 1078.3 2128.9 1069.2 2140.0 1063.3C2151.1 1057.5 2163.3 1052.8 2173.3 1050.0C2183.3 1047.2 2191.7 1046.3 2200.0 1046.7C2208.3 1047.1 2219.4 1051.4 2223.3 1052.3C2224.7 1051.4 2226.7 1050.9 2231.7 1046.7C2236.7 1042.4 2244.2 1033.6 2253.3 1026.7C2262.5 1019.7 2275.6 1010.8 2286.7 1005.0C2297.8 999.2 2310.0 994.3 2320.0 991.7C2330.0 989.1 2339.4 988.9 2346.7 989.3C2353.9 989.8 2360.6 993.5 2363.3 994.3C2364.7 993.3 2366.7 992.9 2371.7 988.3C2376.7 983.7 2384.2 974.2 2393.3 966.7C2402.5 959.2 2416.7 949.2 2426.7 943.3C2436.7 937.5 2445.6 933.9 2453.3 931.7C2461.1 929.4 2467.8 928.9 2473.3 930.0C2478.9 931.1 2483.1 933.9 2486.7 938.3C2490.3 942.8 2493.4 950.3 2495.0 956.7C2496.6 963.1 2496.0 969.4 2496.0 976.7C2496.0 983.9 2496.6 993.3 2495.0 1000.0C2493.4 1006.7 2490.3 1011.1 2486.7 1016.7C2483.1 1022.2 2477.1 1029.0 2473.3 1033.3C2469.6 1037.7 2465.6 1041.1 2464.0 1042.7L2471.3 1052.7L3175.0 1443.0L1691.5 2042.4Z" fill="#00a5ff"/>
<path d="M1428.5 1178.0L1640.0 1343.3C1644.2 1340.8 1659.4 1333.3 1665.0 1328.3C1670.6 1323.3 1668.6 1318.1 1673.3 1313.3C1678.1 1308.6 1686.1 1303.1 1693.3 1300.0C1700.6 1296.9 1709.4 1295.0 1716.7 1295.0C1723.9 1295.0 1731.4 1296.9 1736.7 1300.0C1741.9 1303.1 1746.9 1308.6 1748.3 1313.3C1749.7 1318.1 1745.6 1325.8 1745.0 1328.3C1749.2 1324.2 1760.8 1312.5 1770.0 1303.3C1779.2 1294.2 1789.4 1282.2 1800.0 1273.3C1810.6 1264.4 1822.8 1255.8 1833.3 1250.0C1843.9 1244.2 1855.0 1240.1 1863.3 1238.3C1871.7 1236.6 1878.3 1237.4 1883.3 1239.3C1888.3 1241.3 1891.9 1246.0 1893.3 1250.0C1894.7 1254.0 1892.8 1260.6 1891.7 1263.3C1890.6 1266.1 1887.5 1266.1 1886.7 1266.7C1891.1 1262.8 1904.4 1251.7 1913.3 1243.3C1922.2 1235.0 1930.0 1225.6 1940.0 1216.7C1950.0 1207.8 1962.8 1196.7 1973.3 1190.0C1983.9 1183.3 1995.0 1179.2 2003.3 1176.7C2011.7 1174.2 2017.8 1173.9 2023.3 1175.0C2028.9 1176.1 2034.0 1179.7 2036.7 1183.3C2039.3 1186.9 2039.9 1192.5 2039.3 1196.7C2038.8 1200.8 2034.3 1206.4 2033.3 1208.3C2036.7 1205.3 2045.0 1198.1 2053.3 1190.0C2061.7 1181.9 2072.8 1169.4 2083.3 1160.0C2093.9 1150.6 2106.7 1139.7 2116.7 1133.3C2126.7 1126.9 2135.6 1124.2 2143.3 1121.7C2151.1 1119.2 2157.8 1118.1 2163.3 1118.3C2168.9 1118.6 2173.3 1120.8 2176.7 1123.3C2180.0 1125.8 2182.3 1130.3 2183.3 1133.3C2184.3 1136.4 2182.8 1140.3 2182.7 1141.7C2186.7 1138.1 2197.7 1128.1 2206.7 1120.0C2215.7 1111.9 2226.7 1101.1 2236.7 1093.3C2246.7 1085.6 2257.2 1078.2 2266.7 1073.3C2276.1 1068.4 2285.6 1065.6 2293.3 1064.0C2301.1 1062.4 2308.1 1062.7 2313.3 1064.0C2318.6 1065.3 2322.9 1067.9 2325.0 1071.7C2327.1 1075.4 2325.8 1084.2 2326.0 1086.7C2330.0 1082.8 2341.0 1072.2 2350.0 1063.3C2359.0 1054.4 2370.0 1041.9 2380.0 1033.3C2390.0 1024.7 2401.1 1017.2 2410.0 1011.7C2418.9 1006.1 2426.7 1002.1 2433.3 1000.0C2440.0 997.9 2445.6 997.9 2450.0 999.0C2454.4 1000.1 2458.1 1003.2 2460.0 1006.7C2461.9 1010.2 2462.8 1015.0 2461.7 1020.0C2460.6 1025.0 2456.9 1031.7 2453.3 1036.7C2449.7 1041.7 2444.4 1046.2 2440.0 1050.0C2435.6 1053.8 2428.9 1057.8 2426.7 1059.3L2433.9 1069.3L3175.0 1443.0L1691.5 2042.4Z" fill="#0000ff"/>
<path d="M1440.9 888.2L2298.1 541.9L2308.5 538.3L2319.3 535.8L2330.4 534.3L2341.8 533.9L2353.5 534.6L2365.3 536.4L2377.3 539.3L2389.4 543.2L2401.4 548.1L2413.5 554.1L2425.5 561.1L2437.4 569.0L2449.1 577.9L2460.6 587.6L2471.8 598.3L2482.7 609.7L2493.2 621.9L2503.3 634.8L2513.0 648.3L2522.1 662.4L2530.7 677.1L2538.8 692.2L2546.2 707.8L2553.0 723.6L2559.2 739.8L2564.6 756.1L2569.3 772.6L2573.3 789.1L2576.5 805.7L2579.0 822.1L2580.7 838.4L2581.6 854.5L2581.7 870.2L2581.0 885.7L2579.5 900.7L2577.3 915.2L2574.2 929.1L2570.4 942.5L2565.9 955.2L2560.7 967.1L2554.7 978.3L2548.1 988.7L2540.8 998.2L2532.9 1006.8L2524.4 1014.4L2515.4 1021.1L2505.9 1026.8L2495.9 1031.5L1638.7 1377.8Z" fill="url(#cyShade)"/>
<path d="M1660.0 1053.3C1665.6 1051.1 1680.0 1045.3 1693.3 1040.0C1706.7 1034.7 1721.1 1028.9 1740.0 1021.7C1758.9 1014.4 1785.6 1005.8 1806.7 996.7C1827.8 987.5 1845.6 976.1 1866.7 966.7C1887.8 957.2 1911.1 949.4 1933.3 940.0C1955.6 930.6 1977.8 919.4 2000.0 910.0C2022.2 900.6 2044.4 892.2 2066.7 883.3C2088.9 874.4 2111.1 866.1 2133.3 856.7C2155.6 847.2 2177.8 836.1 2200.0 826.7C2222.2 817.2 2244.4 808.3 2266.7 800.0C2288.9 791.7 2311.1 785.6 2333.3 776.7C2355.6 767.8 2380.6 757.2 2400.0 746.7C2419.4 736.1 2437.2 723.3 2450.0 713.3C2462.8 703.3 2470.7 694.4 2476.7 686.7C2482.6 678.9 2484.6 673.9 2485.7 666.7C2486.8 659.4 2485.4 650.6 2483.3 643.3C2481.3 636.1 2478.3 630.6 2473.3 623.3C2468.3 616.1 2461.1 607.2 2453.3 600.0C2445.6 592.8 2436.7 586.1 2426.7 580.0C2416.7 573.9 2404.4 568.3 2393.3 563.3C2382.2 558.3 2371.1 553.4 2360.0 550.0C2348.9 546.6 2336.7 544.1 2326.7 542.7C2316.7 541.2 2304.4 541.6 2300.0 541.3" fill="none" stroke="#0b1a0b" stroke-width="1.15" stroke-linejoin="round"/>
<path d="M1633.3 1013.3C1637.2 1010.3 1650.0 1000.0 1656.7 995.0C1663.3 990.0 1667.2 988.1 1673.3 983.3C1679.4 978.6 1687.8 971.7 1693.3 966.7C1698.9 961.7 1703.1 956.2 1706.7 953.3C1710.3 950.4 1713.6 950.0 1715.0 949.3C1719.2 949.2 1730.3 949.3 1740.0 948.3C1749.7 947.3 1762.2 946.4 1773.3 943.3C1784.4 940.3 1796.7 935.0 1806.7 930.0C1816.7 925.0 1826.1 918.9 1833.3 913.3C1840.6 907.8 1845.8 900.4 1850.0 896.7C1854.2 892.9 1856.9 891.7 1858.3 890.7C1863.6 890.4 1879.2 890.6 1890.0 889.3C1900.8 888.1 1912.2 886.8 1923.3 883.3C1934.4 879.8 1946.7 873.9 1956.7 868.3C1966.7 862.8 1976.7 855.3 1983.3 850.0C1990.0 844.7 1993.6 839.4 1996.7 836.7C1999.7 833.9 2000.8 833.9 2001.7 833.3C2006.9 833.2 2022.5 833.7 2033.3 832.3C2044.2 830.9 2055.6 828.7 2066.7 825.0C2077.8 821.3 2090.6 815.3 2100.0 810.0C2109.4 804.7 2117.2 798.3 2123.3 793.3C2129.4 788.3 2133.3 782.8 2136.7 780.0C2140.0 777.2 2142.2 777.2 2143.3 776.7C2147.2 776.6 2157.2 777.1 2166.7 776.0C2176.1 774.9 2188.9 773.2 2200.0 770.0C2211.1 766.8 2223.3 761.7 2233.3 756.7C2243.3 751.7 2252.8 745.3 2260.0 740.0C2267.2 734.7 2272.2 728.4 2276.7 725.0C2281.1 721.6 2285.0 720.3 2286.7 719.3C2291.7 719.2 2306.1 719.9 2316.7 718.3C2327.2 716.8 2338.9 713.9 2350.0 710.0C2361.1 706.1 2374.4 700.6 2383.3 695.0C2392.2 689.4 2398.1 683.1 2403.3 676.7C2408.6 670.3 2412.4 663.9 2415.0 656.7C2417.6 649.4 2418.7 640.0 2419.0 633.3C2419.3 626.7 2418.7 622.8 2416.7 616.7C2414.6 610.6 2411.1 602.8 2406.7 596.7C2402.2 590.6 2396.7 585.6 2390.0 580.0C2383.3 574.4 2375.0 567.9 2366.7 563.3C2358.3 558.8 2348.9 555.1 2340.0 552.7C2331.1 550.3 2322.3 549.6 2313.3 549.0C2304.3 548.4 2290.6 549.0 2286.0 549.0" fill="none" stroke="#0b1a0b" stroke-width="1.15" stroke-linejoin="round"/>
<path d="M1600.0 973.3C1603.3 968.8 1614.4 952.7 1620.0 946.0C1625.6 939.3 1628.9 938.2 1633.3 933.3C1637.8 928.4 1643.1 922.2 1646.7 916.7C1650.3 911.1 1652.8 903.7 1655.0 900.0C1657.2 896.3 1659.2 895.3 1660.0 894.3C1665.0 894.3 1679.4 894.3 1690.0 894.0C1700.6 893.7 1712.2 894.4 1723.3 892.7C1734.4 890.9 1747.2 887.4 1756.7 883.3C1766.1 879.3 1773.9 873.9 1780.0 868.3C1786.1 862.8 1790.0 855.0 1793.3 850.0C1796.7 845.0 1797.8 840.7 1800.0 838.3C1802.2 835.9 1805.6 836.1 1806.7 835.7C1812.2 835.7 1828.9 836.4 1840.0 836.0C1851.1 835.6 1862.2 835.7 1873.3 833.3C1884.4 830.9 1897.2 826.7 1906.7 821.7C1916.1 816.7 1923.9 808.9 1930.0 803.3C1936.1 797.8 1939.2 791.9 1943.3 788.3C1947.5 784.7 1953.1 782.8 1955.0 781.7C1960.8 781.6 1978.6 781.8 1990.0 781.0C2001.4 780.2 2012.2 779.6 2023.3 776.7C2034.4 773.7 2047.8 768.6 2056.7 763.3C2065.6 758.1 2071.4 751.1 2076.7 745.0C2081.9 738.9 2085.6 730.6 2088.3 726.7C2091.1 722.8 2092.5 722.5 2093.3 721.7C2097.2 721.8 2107.2 722.9 2116.7 722.7C2126.1 722.4 2138.9 722.1 2150.0 720.0C2161.1 717.9 2173.3 714.4 2183.3 710.0C2193.3 705.6 2202.8 699.4 2210.0 693.3C2217.2 687.2 2222.5 678.1 2226.7 673.3C2230.8 668.6 2233.6 666.4 2235.0 665.0C2240.3 665.3 2255.8 666.9 2266.7 666.7C2277.5 666.4 2288.9 665.6 2300.0 663.3C2311.1 661.1 2324.4 657.2 2333.3 653.3C2342.2 649.4 2348.7 644.4 2353.3 640.0C2357.9 635.6 2360.2 631.7 2361.0 626.7C2361.8 621.7 2360.7 616.1 2358.3 610.0C2355.9 603.9 2351.4 595.8 2346.7 590.0C2341.9 584.2 2335.6 579.4 2330.0 575.0C2324.4 570.6 2319.4 566.1 2313.3 563.3C2307.2 560.6 2300.0 559.3 2293.3 558.3C2286.7 557.3 2279.0 557.2 2273.3 557.3C2267.7 557.5 2261.7 559.0 2259.3 559.3" fill="none" stroke="#0b1a0b" stroke-width="1.15" stroke-linejoin="round"/>
<path d="M1540.0 933.3C1542.8 927.8 1551.7 907.2 1556.7 900.0C1561.7 892.8 1566.9 893.6 1570.0 890.0C1573.1 886.4 1575.0 882.2 1575.0 878.3C1575.0 874.4 1572.5 870.0 1570.0 866.7C1567.5 863.3 1564.7 860.7 1560.0 858.3C1555.3 856.0 1544.7 853.6 1541.7 852.7C1546.9 852.2 1562.5 850.3 1573.3 850.0C1584.2 849.7 1595.6 850.6 1606.7 850.7C1617.8 850.8 1628.9 851.6 1640.0 850.7C1651.1 849.7 1663.3 847.6 1673.3 845.0C1683.3 842.4 1692.8 838.6 1700.0 835.0C1707.2 831.4 1712.9 826.9 1716.7 823.3C1720.4 819.7 1722.1 816.7 1722.7 813.3C1723.2 810.0 1721.8 806.4 1720.0 803.3C1718.2 800.3 1713.1 796.4 1711.7 795.0C1716.4 794.9 1729.7 794.5 1740.0 794.3C1750.3 794.2 1762.2 794.7 1773.3 794.0C1784.4 793.3 1795.6 792.3 1806.7 790.0C1817.8 787.7 1831.1 783.9 1840.0 780.0C1848.9 776.1 1855.1 770.8 1860.0 766.7C1864.9 762.5 1867.9 758.6 1869.3 755.0C1870.7 751.4 1868.9 747.6 1868.3 745.0C1867.8 742.4 1866.4 740.3 1866.0 739.3C1870.0 739.4 1880.4 740.2 1890.0 740.0C1899.6 739.8 1912.2 739.4 1923.3 738.3C1934.4 737.2 1945.6 736.1 1956.7 733.3C1967.8 730.6 1981.1 725.8 1990.0 721.7C1998.9 717.5 2005.8 712.5 2010.0 708.3C2014.2 704.2 2014.7 700.3 2015.0 696.7C2015.3 693.1 2013.1 689.0 2011.7 686.7C2010.3 684.3 2007.5 683.3 2006.7 682.7C2011.1 683.1 2023.3 682.2 2033.3 681.7C2043.3 681.1 2055.6 681.4 2066.7 680.0C2077.8 678.6 2088.9 677.2 2100.0 673.3C2111.1 669.4 2125.3 661.7 2133.3 656.7C2141.4 651.7 2146.1 647.5 2148.3 643.3C2150.6 639.2 2148.6 634.8 2146.7 631.7C2144.7 628.5 2138.3 625.6 2136.7 624.3C2141.7 623.7 2153.3 620.9 2166.7 620.7C2180.0 620.4 2200.0 623.3 2216.7 622.7C2233.3 622.0 2255.0 619.9 2266.7 616.7C2278.3 613.4 2282.2 607.5 2286.7 603.3C2291.1 599.2 2293.1 595.3 2293.3 591.7C2293.6 588.1 2291.1 584.6 2288.3 581.7C2285.6 578.7 2281.4 575.8 2276.7 574.0C2271.9 572.2 2267.8 571.2 2260.0 570.7C2252.2 570.2 2235.0 570.9 2230.0 571.0" fill="none" stroke="#0b1a0b" stroke-width="1.15" stroke-linejoin="round"/>
<path d="M1673.3 1113.3C1679.7 1111.1 1695.0 1105.3 1711.7 1100.0C1728.3 1094.7 1751.9 1088.9 1773.3 1081.7C1794.7 1074.4 1817.8 1065.8 1840.0 1056.7C1862.2 1047.5 1884.4 1036.1 1906.7 1026.7C1928.9 1017.2 1951.1 1008.6 1973.3 1000.0C1995.6 991.4 2017.8 983.3 2040.0 975.0C2062.2 966.7 2089.7 957.8 2106.7 950.0C2123.7 942.2 2126.4 935.3 2142.0 928.3C2157.6 921.4 2179.2 917.5 2200.0 908.3C2220.8 899.2 2244.4 883.6 2266.7 873.3C2288.9 863.1 2311.1 856.1 2333.3 846.7C2355.6 837.2 2380.6 824.2 2400.0 816.7C2419.4 809.2 2436.1 805.0 2450.0 801.7C2463.9 798.3 2473.3 797.3 2483.3 796.7C2493.3 796.0 2501.7 796.3 2510.0 797.7C2518.3 799.1 2526.7 801.3 2533.3 805.0C2540.0 808.7 2545.6 813.6 2550.0 820.0C2554.4 826.4 2557.8 835.6 2560.0 843.3C2562.2 851.1 2562.8 857.2 2563.3 866.7C2563.9 876.1 2563.7 888.9 2563.3 900.0C2562.9 911.1 2562.1 922.2 2561.0 933.3C2559.9 944.4 2559.1 956.7 2556.7 966.7C2554.3 976.7 2551.7 985.0 2546.7 993.3C2541.7 1001.7 2533.9 1010.3 2526.7 1016.7C2519.4 1023.1 2510.0 1028.2 2503.3 1031.7C2496.7 1035.1 2489.4 1036.4 2486.7 1037.3" fill="none" stroke="#0b1a0b" stroke-width="1.15" stroke-linejoin="round"/>
<path d="M1690.0 1170.0C1696.1 1168.1 1715.6 1161.1 1726.7 1158.3C1737.8 1155.6 1746.7 1154.3 1756.7 1153.3C1766.7 1152.4 1780.3 1152.7 1786.7 1152.7C1793.1 1152.7 1793.6 1153.2 1795.0 1153.3C1798.1 1150.6 1805.8 1142.8 1813.3 1136.7C1820.8 1130.6 1830.0 1122.2 1840.0 1116.7C1850.0 1111.1 1862.2 1106.9 1873.3 1103.3C1884.4 1099.7 1896.1 1096.7 1906.7 1095.0C1917.2 1093.3 1931.7 1093.6 1936.7 1093.3C1940.0 1090.6 1947.8 1083.3 1956.7 1076.7C1965.6 1070.0 1978.9 1059.4 1990.0 1053.3C2001.1 1047.2 2012.2 1043.2 2023.3 1040.0C2034.4 1036.8 2047.2 1035.3 2056.7 1034.3C2066.1 1033.4 2076.1 1034.3 2080.0 1034.3C2083.3 1031.7 2091.1 1024.3 2100.0 1018.3C2108.9 1012.3 2122.2 1003.9 2133.3 998.3C2144.4 992.8 2155.6 988.3 2166.7 985.0C2177.8 981.7 2190.3 979.8 2200.0 978.3C2209.7 976.8 2220.8 976.4 2225.0 976.0C2228.6 973.3 2236.9 966.6 2246.7 960.0C2256.4 953.4 2271.7 942.5 2283.3 936.7C2295.0 930.8 2305.6 927.9 2316.7 925.0C2327.8 922.1 2341.7 920.3 2350.0 919.3C2358.3 918.3 2363.9 919.1 2366.7 919.0C2370.0 916.4 2378.3 909.3 2386.7 903.3C2395.0 897.4 2406.1 889.2 2416.7 883.3C2427.2 877.5 2440.0 871.8 2450.0 868.3C2460.0 864.9 2469.4 862.9 2476.7 862.7C2483.9 862.4 2488.3 864.3 2493.3 866.7C2498.3 869.0 2503.3 873.1 2506.7 876.7C2510.0 880.3 2510.6 885.0 2513.3 888.3C2516.1 891.7 2520.8 893.1 2523.3 896.7C2525.8 900.3 2526.9 903.9 2528.3 910.0C2529.7 916.1 2531.4 923.9 2531.7 933.3C2531.9 942.8 2531.9 955.6 2530.0 966.7C2528.1 977.8 2525.0 990.6 2520.0 1000.0C2515.0 1009.4 2506.9 1017.1 2500.0 1023.3C2493.1 1029.6 2481.9 1035.3 2478.3 1037.7" fill="none" stroke="#0b1a0b" stroke-width="1.15" stroke-linejoin="round"/>
<path d="M1693.3 1233.3C1698.9 1231.6 1716.1 1224.4 1726.7 1222.7C1737.2 1220.9 1746.7 1221.6 1756.7 1222.7C1766.7 1223.8 1781.7 1228.2 1786.7 1229.3C1788.1 1229.2 1790.6 1232.1 1795.0 1228.3C1799.4 1224.6 1805.8 1214.2 1813.3 1206.7C1820.8 1199.2 1830.0 1189.7 1840.0 1183.3C1850.0 1176.9 1862.2 1171.8 1873.3 1168.3C1884.4 1164.9 1897.2 1162.8 1906.7 1162.7C1916.1 1162.6 1926.1 1166.8 1930.0 1167.7C1931.4 1167.5 1933.9 1170.2 1938.3 1166.7C1942.8 1163.2 1948.1 1154.4 1956.7 1146.7C1965.3 1138.9 1978.9 1126.9 1990.0 1120.0C2001.1 1113.1 2013.3 1107.9 2023.3 1105.0C2033.3 1102.1 2041.1 1101.6 2050.0 1102.3C2058.9 1103.1 2072.2 1108.2 2076.7 1109.3C2078.3 1108.3 2081.7 1107.4 2086.7 1103.3C2091.7 1099.3 2097.8 1091.7 2106.7 1085.0C2115.6 1078.3 2128.9 1069.2 2140.0 1063.3C2151.1 1057.5 2163.3 1052.8 2173.3 1050.0C2183.3 1047.2 2191.7 1046.3 2200.0 1046.7C2208.3 1047.1 2219.4 1051.4 2223.3 1052.3C2224.7 1051.4 2226.7 1050.9 2231.7 1046.7C2236.7 1042.4 2244.2 1033.6 2253.3 1026.7C2262.5 1019.7 2275.6 1010.8 2286.7 1005.0C2297.8 999.2 2310.0 994.3 2320.0 991.7C2330.0 989.1 2339.4 988.9 2346.7 989.3C2353.9 989.8 2360.6 993.5 2363.3 994.3C2364.7 993.3 2366.7 992.9 2371.7 988.3C2376.7 983.7 2384.2 974.2 2393.3 966.7C2402.5 959.2 2416.7 949.2 2426.7 943.3C2436.7 937.5 2445.6 933.9 2453.3 931.7C2461.1 929.4 2467.8 928.9 2473.3 930.0C2478.9 931.1 2483.1 933.9 2486.7 938.3C2490.3 942.8 2493.4 950.3 2495.0 956.7C2496.6 963.1 2496.0 969.4 2496.0 976.7C2496.0 983.9 2496.6 993.3 2495.0 1000.0C2493.4 1006.7 2490.3 1011.1 2486.7 1016.7C2483.1 1022.2 2477.1 1029.0 2473.3 1033.3C2469.6 1037.7 2465.6 1041.1 2464.0 1042.7" fill="none" stroke="#0b1a0b" stroke-width="1.15" stroke-linejoin="round"/>
<path d="M1640.0 1343.3C1644.2 1340.8 1659.4 1333.3 1665.0 1328.3C1670.6 1323.3 1668.6 1318.1 1673.3 1313.3C1678.1 1308.6 1686.1 1303.1 1693.3 1300.0C1700.6 1296.9 1709.4 1295.0 1716.7 1295.0C1723.9 1295.0 1731.4 1296.9 1736.7 1300.0C1741.9 1303.1 1746.9 1308.6 1748.3 1313.3C1749.7 1318.1 1745.6 1325.8 1745.0 1328.3C1749.2 1324.2 1760.8 1312.5 1770.0 1303.3C1779.2 1294.2 1789.4 1282.2 1800.0 1273.3C1810.6 1264.4 1822.8 1255.8 1833.3 1250.0C1843.9 1244.2 1855.0 1240.1 1863.3 1238.3C1871.7 1236.6 1878.3 1237.4 1883.3 1239.3C1888.3 1241.3 1891.9 1246.0 1893.3 1250.0C1894.7 1254.0 1892.8 1260.6 1891.7 1263.3C1890.6 1266.1 1887.5 1266.1 1886.7 1266.7C1891.1 1262.8 1904.4 1251.7 1913.3 1243.3C1922.2 1235.0 1930.0 1225.6 1940.0 1216.7C1950.0 1207.8 1962.8 1196.7 1973.3 1190.0C1983.9 1183.3 1995.0 1179.2 2003.3 1176.7C2011.7 1174.2 2017.8 1173.9 2023.3 1175.0C2028.9 1176.1 2034.0 1179.7 2036.7 1183.3C2039.3 1186.9 2039.9 1192.5 2039.3 1196.7C2038.8 1200.8 2034.3 1206.4 2033.3 1208.3C2036.7 1205.3 2045.0 1198.1 2053.3 1190.0C2061.7 1181.9 2072.8 1169.4 2083.3 1160.0C2093.9 1150.6 2106.7 1139.7 2116.7 1133.3C2126.7 1126.9 2135.6 1124.2 2143.3 1121.7C2151.1 1119.2 2157.8 1118.1 2163.3 1118.3C2168.9 1118.6 2173.3 1120.8 2176.7 1123.3C2180.0 1125.8 2182.3 1130.3 2183.3 1133.3C2184.3 1136.4 2182.8 1140.3 2182.7 1141.7C2186.7 1138.1 2197.7 1128.1 2206.7 1120.0C2215.7 1111.9 2226.7 1101.1 2236.7 1093.3C2246.7 1085.6 2257.2 1078.2 2266.7 1073.3C2276.1 1068.4 2285.6 1065.6 2293.3 1064.0C2301.1 1062.4 2308.1 1062.7 2313.3 1064.0C2318.6 1065.3 2322.9 1067.9 2325.0 1071.7C2327.1 1075.4 2325.8 1084.2 2326.0 1086.7C2330.0 1082.8 2341.0 1072.2 2350.0 1063.3C2359.0 1054.4 2370.0 1041.9 2380.0 1033.3C2390.0 1024.7 2401.1 1017.2 2410.0 1011.7C2418.9 1006.1 2426.7 1002.1 2433.3 1000.0C2440.0 997.9 2445.6 997.9 2450.0 999.0C2454.4 1000.1 2458.1 1003.2 2460.0 1006.7C2461.9 1010.2 2462.8 1015.0 2461.7 1020.0C2460.6 1025.0 2456.9 1031.7 2453.3 1036.7C2449.7 1041.7 2444.4 1046.2 2440.0 1050.0C2435.6 1053.8 2428.9 1057.8 2426.7 1059.3" fill="none" stroke="#0b1a0b" stroke-width="1.15" stroke-linejoin="round"/>
<path d="M1633.8 1098.8L2559.0 725.0" stroke="#00008b" stroke-width="3.600" fill="none"/>
</g>
<path d="M2288.9 546.1L2297.9 542.0L2307.2 538.7L2316.8 536.3L2326.7 534.7L2336.8 534.0L2347.1 534.1L2357.6 535.1L2368.3 537.0L2379.0 539.7L2389.8 543.3L2400.6 547.8L2411.4 553.0L2422.2 559.0L2432.9 565.9L2443.4 573.5L2453.8 581.8L2464.0 590.8L2474.0 600.5L2483.7 610.8L2493.1 621.7L2502.2 633.2L2510.9 645.3L2519.2 657.8L2527.1 670.7L2534.6 684.1L2541.5 697.8L2548.0 711.8L2554.0 726.1L2559.4 740.6L2564.3 755.2L2568.6 769.9L2572.3 784.7L2575.4 799.5L2577.9 814.3L2579.8 829.0L2581.0 843.5L2581.7 857.8L2581.6 871.9L2581.0 885.7L2579.7 899.1L2577.8 912.2L2575.3 924.8L2572.1 937.0L2568.4 948.6L2564.0 959.7L2559.1 970.2L2553.7 980.1L2547.6 989.3L2541.1 997.8L2534.1 1005.6L2526.6 1012.6L2518.7 1018.8L2510.4 1024.3L2501.6 1028.9L2492.5 1032.7L2483.1 1035.7" fill="none" stroke="#00008b" stroke-width="4" clip-path="url(#cyRim)"/>
<g clip-path="url(#cyFront)"><path d="M1695.8 1070.0L1703.9 1091.5L1710.6 1113.4L1716.1 1135.5L1720.3 1157.5L1723.0 1179.3L1724.4 1200.8L1724.3 1221.8L1722.9 1242.0L1720.1 1261.5L1715.9 1280.0L1710.3 1297.3L1703.5 1313.5L1695.4 1328.2L1686.1 1341.5L1675.7 1353.1L1664.3 1363.1L1651.9 1371.4L1638.7 1377.8L1624.7 1382.3L1610.1 1385.0L1594.9 1385.8L1579.4 1384.6L1563.5 1381.5L1547.4 1376.5L1531.3 1369.7L1515.3 1361.0L1499.4 1350.7L1483.8 1338.6L1468.7 1325.0L1454.1 1310.0L1440.2 1293.6L1427.0 1276.0L1414.7 1257.3L1403.3 1237.6L1393.0 1217.1L1383.8 1196.0L1375.7 1174.5L1369.0 1152.6L1363.5 1130.5L1359.3 1108.5L1356.6 1086.7L1355.2 1065.2L1355.3 1044.2L1356.7 1024.0L1359.5 1004.5L1363.7 986.0L1369.3 968.7L1376.1 952.5L1384.2 937.8L1393.5 924.5L1403.9 912.9L1415.3 902.9L1427.7 894.6L1440.9 888.2L1454.9 883.7L1469.5 881.0L1484.7 880.2L1500.2 881.4L1516.1 884.5L1532.2 889.5L1548.3 896.3L1564.3 905.0L1580.2 915.3L1595.8 927.4L1610.9 941.0L1625.5 956.0L1639.4 972.4L1652.6 990.0L1664.9 1008.7L1676.3 1028.4L1686.6 1048.9L1695.8 1070.0Z" fill="#00ff00"/><path d="M1362.2 1172.7C1365.6 1170.9 1375.0 1166.1 1382.7 1162.4C1390.3 1158.7 1399.7 1154.7 1408.2 1150.5C1416.8 1146.2 1427.6 1140.2 1433.8 1136.8C1440.1 1133.4 1443.8 1131.1 1445.8 1130.0C1449.2 1129.0 1458.3 1126.6 1466.2 1124.2C1474.2 1121.8 1483.3 1119.4 1493.5 1115.7C1503.8 1112.0 1516.3 1107.1 1527.7 1102.0C1539.0 1096.9 1551.0 1090.2 1561.8 1085.0C1572.6 1079.7 1587.4 1072.9 1592.5 1070.5C1594.8 1070.0 1599.9 1069.7 1606.1 1067.9C1612.4 1066.1 1621.8 1062.2 1630.0 1059.4C1638.3 1056.5 1647.1 1052.8 1655.6 1050.8C1664.1 1048.8 1673.5 1049.0 1681.2 1047.4C1688.9 1045.8 1698.3 1042.3 1701.7 1041.3L1759.0 73.8L831.8 448.4Z" fill="#aaff00"/>
<path d="M1350.2 1114.0C1353.4 1112.4 1362.2 1108.3 1369.0 1104.6C1375.8 1100.9 1384.1 1096.5 1391.2 1091.8C1398.3 1087.1 1404.8 1081.7 1411.7 1076.4C1418.5 1071.2 1428.7 1062.9 1432.1 1060.2C1434.5 1059.7 1442.1 1057.4 1446.6 1056.8C1451.2 1056.2 1454.4 1057.2 1459.4 1056.8C1464.4 1056.4 1470.8 1055.7 1476.5 1054.3C1482.2 1052.8 1487.9 1050.6 1493.5 1048.3C1499.2 1046.0 1504.9 1043.3 1510.6 1040.6C1516.3 1037.9 1522.0 1035.2 1527.7 1032.1C1533.4 1028.9 1539.0 1025.2 1544.7 1021.8C1550.4 1018.4 1556.8 1014.4 1561.8 1011.6C1566.8 1008.8 1572.4 1005.9 1574.6 1004.8C1577.3 1004.2 1585.8 1001.8 1590.8 1001.0C1595.8 1000.2 1599.3 1000.6 1604.4 1000.0C1609.6 999.4 1615.5 998.8 1621.5 997.6C1627.5 996.4 1634.6 994.2 1640.3 992.8C1645.9 991.5 1650.2 991.7 1655.6 989.4C1661.0 987.1 1669.8 980.9 1672.7 979.2L1759.0 73.8L831.8 448.4Z" fill="#ffff00"/>
<path d="M1346.8 1052.5C1350.0 1050.8 1359.6 1046.0 1365.6 1042.3C1371.6 1038.6 1377.1 1034.3 1382.7 1030.4C1388.2 1026.4 1392.3 1022.7 1398.9 1018.4C1405.4 1014.2 1414.1 1009.0 1421.9 1004.8C1429.7 1000.5 1438.2 996.3 1445.8 992.8C1453.3 989.4 1463.5 985.4 1467.1 984.0C1468.7 984.3 1472.9 985.4 1476.5 986.0C1480.0 986.6 1484.2 987.6 1488.4 987.4C1492.7 987.1 1497.0 986.4 1502.1 984.6C1507.2 982.9 1513.4 979.8 1519.1 976.6C1524.8 973.4 1531.1 969.1 1536.2 965.5C1541.3 962.0 1545.6 958.4 1549.8 955.3C1554.1 952.2 1557.8 949.3 1561.8 946.8C1565.8 944.2 1570.3 943.1 1573.7 939.9C1577.1 936.8 1579.1 932.3 1582.3 928.0C1585.4 923.7 1590.8 916.6 1592.5 914.4L1759.0 73.8L831.8 448.4Z" fill="#ffa500"/>
<path d="M1350.2 989.4C1353.8 987.1 1364.7 980.0 1371.6 975.8C1378.4 971.5 1383.6 969.0 1391.2 963.8C1398.7 958.7 1408.2 951.3 1416.8 945.1C1425.3 938.8 1435.3 931.6 1442.4 926.3C1449.5 921.0 1454.9 917.1 1459.4 913.5C1464.0 909.9 1465.1 907.2 1469.7 905.0C1474.2 902.8 1482.6 900.4 1486.7 900.4C1490.8 900.4 1493.1 904.2 1494.4 905.0C1495.1 905.7 1496.0 908.4 1498.7 909.6C1501.4 910.7 1506.3 911.8 1510.6 911.8C1514.9 911.8 1520.0 911.0 1524.3 909.6C1528.5 908.2 1532.8 905.3 1536.2 903.3C1539.6 901.2 1541.6 900.0 1544.7 897.3C1547.9 894.6 1553.3 888.8 1555.0 887.1L1759.0 73.8L831.8 448.4Z" fill="#ff0000"/>
<path d="M1384.4 1227.2C1387.8 1225.8 1398.0 1221.3 1404.8 1218.7C1411.7 1216.2 1417.6 1214.4 1425.3 1211.9C1433.0 1209.3 1443.5 1205.8 1450.9 1203.4C1458.3 1200.9 1466.5 1198.4 1469.7 1197.4C1472.2 1196.1 1478.2 1192.8 1485.0 1189.7C1491.8 1186.6 1500.7 1182.9 1510.6 1178.6C1520.6 1174.4 1533.4 1168.5 1544.7 1164.1C1556.1 1159.7 1567.8 1155.9 1578.8 1152.2C1589.9 1148.5 1605.9 1143.6 1611.3 1141.9C1613.8 1140.8 1620.6 1137.4 1626.6 1135.1C1632.6 1132.8 1638.0 1130.9 1647.1 1128.3C1656.2 1125.7 1671.3 1122.6 1681.2 1119.8C1691.2 1116.9 1699.4 1113.8 1706.8 1111.2C1714.2 1108.7 1722.4 1105.5 1725.6 1104.4L2433.3 1742.7L1506.1 2117.3Z" fill="#00ff9c"/>
<path d="M1413.4 1275.0C1416.8 1273.9 1426.2 1270.2 1433.8 1268.2C1441.5 1266.2 1450.9 1264.4 1459.4 1263.1C1468.0 1261.8 1476.5 1260.9 1485.0 1260.5C1493.5 1260.1 1506.3 1260.5 1510.6 1260.5C1510.9 1259.8 1509.5 1258.5 1512.3 1256.2C1515.2 1254.0 1522.3 1250.6 1527.7 1246.9C1533.1 1243.2 1537.6 1238.5 1544.7 1234.1C1551.8 1229.7 1561.8 1224.4 1570.3 1220.4C1578.8 1216.4 1587.4 1212.9 1595.9 1210.2C1604.4 1207.5 1612.1 1205.5 1621.5 1204.2C1630.9 1202.9 1647.1 1202.8 1652.2 1202.5C1655.6 1200.4 1666.4 1194.4 1672.7 1189.7C1678.9 1185.0 1684.1 1178.6 1689.7 1174.4C1695.4 1170.1 1702.5 1166.4 1706.8 1164.1C1711.1 1161.8 1711.1 1162.1 1715.3 1160.7C1719.6 1159.3 1729.5 1156.4 1732.4 1155.6L2433.3 1742.7L1506.1 2117.3Z" fill="#00ffff"/>
<path d="M1456.0 1319.4C1459.1 1318.5 1467.1 1315.4 1474.8 1314.3C1482.5 1313.1 1493.3 1312.8 1502.1 1312.2C1510.9 1311.6 1519.4 1311.6 1527.7 1310.8C1535.9 1310.0 1543.6 1309.6 1551.5 1307.4C1559.5 1305.3 1568.9 1301.7 1575.4 1298.0C1582.0 1294.3 1588.2 1287.4 1590.8 1285.2C1593.1 1283.5 1599.3 1278.1 1604.4 1275.0C1609.6 1271.9 1615.8 1268.9 1621.5 1266.5C1627.2 1264.1 1632.9 1262.1 1638.6 1260.5C1644.2 1258.9 1649.9 1258.0 1655.6 1257.1C1661.3 1256.2 1665.6 1256.7 1672.7 1255.4C1679.8 1254.1 1694.0 1250.4 1698.3 1249.4C1701.1 1246.0 1710.8 1233.2 1715.3 1229.0C1719.9 1224.7 1721.4 1225.0 1725.6 1223.8C1729.7 1222.7 1737.6 1222.4 1740.1 1222.1L2433.3 1742.7L1506.1 2117.3Z" fill="#00a5ff"/>
<path d="M1510.6 1362.0C1513.7 1361.2 1520.8 1358.3 1529.4 1356.9C1537.9 1355.5 1550.7 1354.3 1561.8 1353.5C1572.9 1352.6 1584.5 1352.2 1595.9 1351.8C1607.3 1351.4 1622.6 1351.5 1630.0 1350.9C1637.4 1350.4 1636.0 1350.2 1640.3 1348.4C1644.5 1346.5 1651.6 1343.1 1655.6 1339.8C1659.6 1336.6 1662.7 1330.6 1664.1 1328.8C1664.1 1327.5 1662.7 1324.1 1664.1 1321.1C1665.6 1318.1 1668.4 1314.0 1672.7 1310.8C1676.9 1307.7 1684.1 1304.6 1689.7 1302.3C1695.4 1300.0 1699.7 1298.6 1706.8 1297.2C1713.9 1295.8 1728.1 1294.3 1732.4 1293.8L2433.3 1742.7L1506.1 2117.3Z" fill="#0000ff"/>
<path d="M1688.2 1073.1L1695.8 1093.6L1702.2 1114.4L1707.4 1135.3L1711.4 1156.3L1714.0 1177.0L1715.3 1197.5L1715.3 1217.4L1713.9 1236.7L1711.2 1255.2L1707.2 1272.7L1701.9 1289.3L1695.4 1304.6L1687.7 1318.6L1678.9 1331.2L1669.0 1342.3L1658.2 1351.8L1646.4 1359.6L1633.8 1365.7L1620.5 1370.1L1606.6 1372.6L1592.2 1373.3L1577.4 1372.2L1562.3 1369.3L1547.0 1364.5L1531.7 1358.0L1516.5 1349.8L1501.4 1339.9L1486.6 1328.5L1472.2 1315.6L1458.3 1301.3L1445.1 1285.7L1432.5 1268.9L1420.8 1251.1L1410.0 1232.4L1400.2 1213.0L1391.4 1192.9L1383.8 1172.4L1377.4 1151.6L1372.2 1130.7L1368.2 1109.7L1365.6 1089.0L1364.3 1068.5L1364.3 1048.6L1365.7 1029.3L1368.4 1010.8L1372.4 993.3L1377.7 976.7L1384.2 961.4L1391.9 947.4L1400.7 934.8L1410.6 923.7L1421.4 914.2L1433.2 906.4L1445.8 900.3L1459.1 895.9L1473.0 893.4L1487.4 892.7L1502.2 893.8L1517.3 896.7L1532.6 901.5L1547.9 908.0L1563.1 916.2L1578.2 926.1L1593.0 937.5L1607.4 950.4L1621.3 964.7L1634.5 980.3L1647.1 997.1L1658.8 1014.9L1669.6 1033.6L1679.4 1053.0L1688.2 1073.1Z" fill="url(#cyShadeIn)"/>
<path d="M1697.6 1069.2L1705.7 1091.1L1712.6 1113.2L1718.1 1135.5L1722.3 1157.8L1725.1 1179.8L1726.5 1201.6L1726.4 1222.8L1725.0 1243.3L1722.1 1263.0L1717.9 1281.7L1712.3 1299.2L1705.3 1315.5L1697.1 1330.4L1687.8 1343.8L1677.3 1355.6L1665.7 1365.7L1653.2 1374.1L1639.8 1380.6L1625.7 1385.2L1610.9 1387.9L1595.6 1388.6L1579.8 1387.4L1563.8 1384.3L1547.5 1379.3L1531.2 1372.4L1515.0 1363.6L1498.9 1353.1L1483.2 1341.0L1467.9 1327.2L1453.1 1312.0L1439.0 1295.4L1425.7 1277.6L1413.2 1258.7L1401.7 1238.8L1391.3 1218.1L1382.0 1196.8L1373.9 1174.9L1367.0 1152.8L1361.5 1130.5L1357.3 1108.2L1354.5 1086.2L1353.1 1064.4L1353.2 1043.2L1354.6 1022.7L1357.5 1003.0L1361.7 984.3L1367.3 966.8L1374.3 950.5L1382.5 935.6L1391.8 922.2L1402.3 910.4L1413.9 900.3L1426.4 891.9L1439.8 885.4L1453.9 880.8L1468.7 878.1L1484.0 877.4L1499.8 878.6L1515.8 881.7L1532.1 886.7L1548.4 893.6L1564.6 902.4L1580.7 912.9L1596.4 925.0L1611.7 938.8L1626.5 954.0L1640.6 970.6L1653.9 988.4L1666.4 1007.3L1677.9 1027.2L1688.3 1047.9L1697.6 1069.2ZM1688.2 1073.1L1695.8 1093.6L1702.2 1114.4L1707.4 1135.3L1711.4 1156.3L1714.0 1177.0L1715.3 1197.5L1715.3 1217.4L1713.9 1236.7L1711.2 1255.2L1707.2 1272.7L1701.9 1289.3L1695.4 1304.6L1687.7 1318.6L1678.9 1331.2L1669.0 1342.3L1658.2 1351.8L1646.4 1359.6L1633.8 1365.7L1620.5 1370.1L1606.6 1372.6L1592.2 1373.3L1577.4 1372.2L1562.3 1369.3L1547.0 1364.5L1531.7 1358.0L1516.5 1349.8L1501.4 1339.9L1486.6 1328.5L1472.2 1315.6L1458.3 1301.3L1445.1 1285.7L1432.5 1268.9L1420.8 1251.1L1410.0 1232.4L1400.2 1213.0L1391.4 1192.9L1383.8 1172.4L1377.4 1151.6L1372.2 1130.7L1368.2 1109.7L1365.6 1089.0L1364.3 1068.5L1364.3 1048.6L1365.7 1029.3L1368.4 1010.8L1372.4 993.3L1377.7 976.7L1384.2 961.4L1391.9 947.4L1400.7 934.8L1410.6 923.7L1421.4 914.2L1433.2 906.4L1445.8 900.3L1459.1 895.9L1473.0 893.4L1487.4 892.7L1502.2 893.8L1517.3 896.7L1532.6 901.5L1547.9 908.0L1563.1 916.2L1578.2 926.1L1593.0 937.5L1607.4 950.4L1621.3 964.7L1634.5 980.3L1647.1 997.1L1658.8 1014.9L1669.6 1033.6L1679.4 1053.0L1688.2 1073.1Z" fill="#000" fill-opacity=".14" fill-rule="evenodd"/>
<g clip-path="url(#cyFrontIn)">
<path d="M1362.2 1172.7C1365.6 1170.9 1375.0 1166.1 1382.7 1162.4C1390.3 1158.7 1399.7 1154.7 1408.2 1150.5C1416.8 1146.2 1427.6 1140.2 1433.8 1136.8C1440.1 1133.4 1443.8 1131.1 1445.8 1130.0C1449.2 1129.0 1458.3 1126.6 1466.2 1124.2C1474.2 1121.8 1483.3 1119.4 1493.5 1115.7C1503.8 1112.0 1516.3 1107.1 1527.7 1102.0C1539.0 1096.9 1551.0 1090.2 1561.8 1085.0C1572.6 1079.7 1587.4 1072.9 1592.5 1070.5C1594.8 1070.0 1599.9 1069.7 1606.1 1067.9C1612.4 1066.1 1621.8 1062.2 1630.0 1059.4C1638.3 1056.5 1647.1 1052.8 1655.6 1050.8C1664.1 1048.8 1673.5 1049.0 1681.2 1047.4C1688.9 1045.8 1698.3 1042.3 1701.7 1041.3" stroke="#0b1a0b" stroke-width="1.15" stroke-linejoin="round" fill="none"/>
<path d="M1350.2 1114.0C1353.4 1112.4 1362.2 1108.3 1369.0 1104.6C1375.8 1100.9 1384.1 1096.5 1391.2 1091.8C1398.3 1087.1 1404.8 1081.7 1411.7 1076.4C1418.5 1071.2 1428.7 1062.9 1432.1 1060.2C1434.5 1059.7 1442.1 1057.4 1446.6 1056.8C1451.2 1056.2 1454.4 1057.2 1459.4 1056.8C1464.4 1056.4 1470.8 1055.7 1476.5 1054.3C1482.2 1052.8 1487.9 1050.6 1493.5 1048.3C1499.2 1046.0 1504.9 1043.3 1510.6 1040.6C1516.3 1037.9 1522.0 1035.2 1527.7 1032.1C1533.4 1028.9 1539.0 1025.2 1544.7 1021.8C1550.4 1018.4 1556.8 1014.4 1561.8 1011.6C1566.8 1008.8 1572.4 1005.9 1574.6 1004.8C1577.3 1004.2 1585.8 1001.8 1590.8 1001.0C1595.8 1000.2 1599.3 1000.6 1604.4 1000.0C1609.6 999.4 1615.5 998.8 1621.5 997.6C1627.5 996.4 1634.6 994.2 1640.3 992.8C1645.9 991.5 1650.2 991.7 1655.6 989.4C1661.0 987.1 1669.8 980.9 1672.7 979.2" stroke="#0b1a0b" stroke-width="1.15" stroke-linejoin="round" fill="none"/>
<path d="M1346.8 1052.5C1350.0 1050.8 1359.6 1046.0 1365.6 1042.3C1371.6 1038.6 1377.1 1034.3 1382.7 1030.4C1388.2 1026.4 1392.3 1022.7 1398.9 1018.4C1405.4 1014.2 1414.1 1009.0 1421.9 1004.8C1429.7 1000.5 1438.2 996.3 1445.8 992.8C1453.3 989.4 1463.5 985.4 1467.1 984.0C1468.7 984.3 1472.9 985.4 1476.5 986.0C1480.0 986.6 1484.2 987.6 1488.4 987.4C1492.7 987.1 1497.0 986.4 1502.1 984.6C1507.2 982.9 1513.4 979.8 1519.1 976.6C1524.8 973.4 1531.1 969.1 1536.2 965.5C1541.3 962.0 1545.6 958.4 1549.8 955.3C1554.1 952.2 1557.8 949.3 1561.8 946.8C1565.8 944.2 1570.3 943.1 1573.7 939.9C1577.1 936.8 1579.1 932.3 1582.3 928.0C1585.4 923.7 1590.8 916.6 1592.5 914.4" stroke="#0b1a0b" stroke-width="1.15" stroke-linejoin="round" fill="none"/>
<path d="M1350.2 989.4C1353.8 987.1 1364.7 980.0 1371.6 975.8C1378.4 971.5 1383.6 969.0 1391.2 963.8C1398.7 958.7 1408.2 951.3 1416.8 945.1C1425.3 938.8 1435.3 931.6 1442.4 926.3C1449.5 921.0 1454.9 917.1 1459.4 913.5C1464.0 909.9 1465.1 907.2 1469.7 905.0C1474.2 902.8 1482.6 900.4 1486.7 900.4C1490.8 900.4 1493.1 904.2 1494.4 905.0C1495.1 905.7 1496.0 908.4 1498.7 909.6C1501.4 910.7 1506.3 911.8 1510.6 911.8C1514.9 911.8 1520.0 911.0 1524.3 909.6C1528.5 908.2 1532.8 905.3 1536.2 903.3C1539.6 901.2 1541.6 900.0 1544.7 897.3C1547.9 894.6 1553.3 888.8 1555.0 887.1" stroke="#0b1a0b" stroke-width="1.15" stroke-linejoin="round" fill="none"/>
<path d="M1384.4 1227.2C1387.8 1225.8 1398.0 1221.3 1404.8 1218.7C1411.7 1216.2 1417.6 1214.4 1425.3 1211.9C1433.0 1209.3 1443.5 1205.8 1450.9 1203.4C1458.3 1200.9 1466.5 1198.4 1469.7 1197.4C1472.2 1196.1 1478.2 1192.8 1485.0 1189.7C1491.8 1186.6 1500.7 1182.9 1510.6 1178.6C1520.6 1174.4 1533.4 1168.5 1544.7 1164.1C1556.1 1159.7 1567.8 1155.9 1578.8 1152.2C1589.9 1148.5 1605.9 1143.6 1611.3 1141.9C1613.8 1140.8 1620.6 1137.4 1626.6 1135.1C1632.6 1132.8 1638.0 1130.9 1647.1 1128.3C1656.2 1125.7 1671.3 1122.6 1681.2 1119.8C1691.2 1116.9 1699.4 1113.8 1706.8 1111.2C1714.2 1108.7 1722.4 1105.5 1725.6 1104.4" stroke="#0b1a0b" stroke-width="1.15" stroke-linejoin="round" fill="none"/>
<path d="M1413.4 1275.0C1416.8 1273.9 1426.2 1270.2 1433.8 1268.2C1441.5 1266.2 1450.9 1264.4 1459.4 1263.1C1468.0 1261.8 1476.5 1260.9 1485.0 1260.5C1493.5 1260.1 1506.3 1260.5 1510.6 1260.5C1510.9 1259.8 1509.5 1258.5 1512.3 1256.2C1515.2 1254.0 1522.3 1250.6 1527.7 1246.9C1533.1 1243.2 1537.6 1238.5 1544.7 1234.1C1551.8 1229.7 1561.8 1224.4 1570.3 1220.4C1578.8 1216.4 1587.4 1212.9 1595.9 1210.2C1604.4 1207.5 1612.1 1205.5 1621.5 1204.2C1630.9 1202.9 1647.1 1202.8 1652.2 1202.5C1655.6 1200.4 1666.4 1194.4 1672.7 1189.7C1678.9 1185.0 1684.1 1178.6 1689.7 1174.4C1695.4 1170.1 1702.5 1166.4 1706.8 1164.1C1711.1 1161.8 1711.1 1162.1 1715.3 1160.7C1719.6 1159.3 1729.5 1156.4 1732.4 1155.6" stroke="#0b1a0b" stroke-width="1.15" stroke-linejoin="round" fill="none"/>
<path d="M1456.0 1319.4C1459.1 1318.5 1467.1 1315.4 1474.8 1314.3C1482.5 1313.1 1493.3 1312.8 1502.1 1312.2C1510.9 1311.6 1519.4 1311.6 1527.7 1310.8C1535.9 1310.0 1543.6 1309.6 1551.5 1307.4C1559.5 1305.3 1568.9 1301.7 1575.4 1298.0C1582.0 1294.3 1588.2 1287.4 1590.8 1285.2C1593.1 1283.5 1599.3 1278.1 1604.4 1275.0C1609.6 1271.9 1615.8 1268.9 1621.5 1266.5C1627.2 1264.1 1632.9 1262.1 1638.6 1260.5C1644.2 1258.9 1649.9 1258.0 1655.6 1257.1C1661.3 1256.2 1665.6 1256.7 1672.7 1255.4C1679.8 1254.1 1694.0 1250.4 1698.3 1249.4C1701.1 1246.0 1710.8 1233.2 1715.3 1229.0C1719.9 1224.7 1721.4 1225.0 1725.6 1223.8C1729.7 1222.7 1737.6 1222.4 1740.1 1222.1" stroke="#0b1a0b" stroke-width="1.15" stroke-linejoin="round" fill="none"/>
<path d="M1510.6 1362.0C1513.7 1361.2 1520.8 1358.3 1529.4 1356.9C1537.9 1355.5 1550.7 1354.3 1561.8 1353.5C1572.9 1352.6 1584.5 1352.2 1595.9 1351.8C1607.3 1351.4 1622.6 1351.5 1630.0 1350.9C1637.4 1350.4 1636.0 1350.2 1640.3 1348.4C1644.5 1346.5 1651.6 1343.1 1655.6 1339.8C1659.6 1336.6 1662.7 1330.6 1664.1 1328.8C1664.1 1327.5 1662.7 1324.1 1664.1 1321.1C1665.6 1318.1 1668.4 1314.0 1672.7 1310.8C1676.9 1307.7 1684.1 1304.6 1689.7 1302.3C1695.4 1300.0 1699.7 1298.6 1706.8 1297.2C1713.9 1295.8 1728.1 1294.3 1732.4 1293.8" stroke="#0b1a0b" stroke-width="1.15" stroke-linejoin="round" fill="none"/>
<path d="M1370.7 1002.9L1574.7 920.4L1580.7 935.3L1376.7 1017.7Z" fill="#c88400" fill-opacity="1"/>
<path d="M1439.8 992.2L1486.1 973.5L1488.8 980.0L1442.4 998.7Z" fill="#d8d000" fill-opacity="1"/>
<path d="M1370.7 1002.9L1580.3 918.2" stroke="#00008b" stroke-width="4.2" fill="none"/>
<path d="M1375.3 1008.6L1582.9 924.7" stroke="#00008b" stroke-width="4.2" fill="none"/>
<path d="M1380.9 1015.5L1586.1 932.6" stroke="#00008b" stroke-width="4.2" fill="none"/>
<path d="M1385.4 1021.2L1588.7 939.1" stroke="#00008b" stroke-width="1.8" fill="none"/>
<path d="M1369.9 1010.5L1379.1 1013.6L1378.9 1022.8L1370.7 1019.4Z" fill="#d89a10" stroke="#00008b" stroke-width="3"/>
<path d="M1369.9 1010.5L1373.5 1003.9L1383.3 1006.9L1379.1 1013.6Z" fill="#c88400" stroke="#00008b" stroke-width="3" stroke-linejoin="round"/>
<path d="M1390.3 1184.8L1685.2 1065.6L1690.0 1077.7L1395.2 1196.8Z" fill="#00e000" fill-opacity="1"/>
<path d="M1390.3 1184.8L1689.8 1063.8" stroke="#00008b" stroke-width="4.8" fill="none"/>
<path d="M1395.4 1197.3L1694.8 1076.3" stroke="#00008b" stroke-width="4.8" fill="none"/>
<path d="M1389.4 1185.1L1397.4 1183.5L1401.9 1194.7L1393.9 1196.3Z" fill="#18c818" stroke="#00008b" stroke-width="2.6"/>
<path d="M1672.7 1069.6L1680.7 1068.0L1685.9 1081.0L1678.0 1082.6Z" fill="#18c818" stroke="#00008b" stroke-width="2.6"/>
<path d="M1497.0 1326.1L1704.7 1242.2L1711.8 1259.8L1504.1 1343.7Z" fill="#0a86d2" fill-opacity="1"/>
<path d="M1496.1 1326.5L1710.3 1239.9" stroke="#00008b" stroke-width="4.2" fill="none"/>
<path d="M1500.3 1331.8L1712.7 1246.0" stroke="#00008b" stroke-width="4.2" fill="none"/>
<path d="M1504.6 1337.1L1715.1 1252.0" stroke="#00008b" stroke-width="4.2" fill="none"/>
<path d="M1508.8 1342.4L1717.6 1258.0" stroke="#00008b" stroke-width="2" fill="none"/>
<path d="M1494.8 1325.9L1502.4 1326.1L1509.5 1343.7L1501.9 1343.5Z" fill="#1a90e0" stroke="#00008b" stroke-width="2.6"/>
<path d="M1441.7 900.8L1501.0 876.9L1505.5 888.0L1446.2 912.0Z" fill="#f00000" stroke="#00008b" stroke-width="2.800"/>
<path d="M1439.8 901.6L1448.0 900.5L1452.5 911.6L1444.3 912.7Z" fill="#d00000" stroke="#00008b" stroke-width="2.400"/>
<path d="M1626.9 1356.6L1685.3 1333.0L1689.8 1344.2L1631.4 1367.8Z" fill="#0c0cf0" stroke="#00008b" stroke-width="2.800"/>
<path d="M1624.3 1355.5L1632.5 1354.4L1637.0 1365.5L1628.8 1366.7Z" fill="#0000c0" stroke="#00008b" stroke-width="2.400"/>
<path d="M1716.6 1346.3L1706.2 1349.9L1695.4 1352.4L1684.2 1353.9L1672.8 1354.3L1661.2 1353.6L1649.3 1351.8L1637.4 1349.0L1625.3 1345.0L1613.2 1340.1L1601.1 1334.1L1589.1 1327.1L1577.3 1319.2L1565.6 1310.3L1554.1 1300.6L1542.9 1289.9L1532.0 1278.5L1521.5 1266.3L1511.4 1253.5L1501.7 1239.9L1492.6 1225.8L1483.9 1211.1L1475.9 1196.0L1468.4 1180.5L1461.6 1164.6L1455.5 1148.4L1450.1 1132.1L1445.3 1115.6L1441.4 1099.1L1438.1 1082.6L1435.7 1066.1L1434.0 1049.8L1433.1 1033.7L1433.0 1018.0L1433.7 1002.5L1435.2 987.5L1437.4 973.0L1440.4 959.1L1444.2 945.7L1448.8 933.0L1454.0 921.1L1460.0 909.9L1466.6 899.5L1473.9 890.0L1481.8 881.4L1490.2 873.8L1499.3 867.1L1508.8 861.4L1518.8 856.8" fill="none" stroke="#00008b" stroke-width="2"/>
<path d="M1712.1 1335.2L1702.1 1338.6L1691.8 1341.0L1681.2 1342.4L1670.3 1342.8L1659.2 1342.1L1647.9 1340.4L1636.5 1337.7L1625.0 1334.0L1613.4 1329.2L1601.9 1323.5L1590.4 1316.9L1579.1 1309.3L1567.9 1300.8L1557.0 1291.5L1546.3 1281.4L1535.9 1270.5L1525.8 1258.8L1516.2 1246.5L1507.0 1233.6L1498.2 1220.1L1490.0 1206.1L1482.3 1191.7L1475.2 1176.9L1468.7 1161.7L1462.9 1146.3L1457.7 1130.7L1453.2 1115.0L1449.4 1099.2L1446.3 1083.4L1443.9 1067.7L1442.3 1052.2L1441.5 1036.8L1441.4 1021.8L1442.0 1007.0L1443.5 992.7L1445.6 978.9L1448.5 965.5L1452.1 952.8L1456.4 940.7L1461.5 929.3L1467.1 918.6L1473.5 908.7L1480.4 899.6L1487.9 891.4L1496.0 884.1L1504.6 877.7L1513.7 872.3L1523.3 867.9" fill="none" stroke="#00008b" stroke-width="4.400"/>
<path d="M1722.3 1331.1L1712.3 1334.5L1702.0 1336.9L1691.4 1338.3L1680.5 1338.7L1669.4 1338.0L1658.1 1336.3L1646.7 1333.6L1635.2 1329.8L1623.6 1325.1L1612.1 1319.4L1600.6 1312.8L1589.3 1305.2L1578.1 1296.7L1567.2 1287.4L1556.5 1277.3L1546.1 1266.4L1536.0 1254.7L1526.4 1242.4L1517.2 1229.5L1508.4 1216.0L1500.2 1202.0L1492.5 1187.6L1485.4 1172.7L1478.9 1157.6L1473.1 1142.2L1467.9 1126.6L1463.4 1110.9L1459.6 1095.1L1456.5 1079.3L1454.1 1063.6L1452.5 1048.0L1451.7 1032.7L1451.6 1017.6L1452.2 1002.9L1453.7 988.6L1455.8 974.8L1458.7 961.4L1462.3 948.7L1466.6 936.6L1471.7 925.2L1477.3 914.5L1483.7 904.6L1490.6 895.5L1498.1 887.3L1506.2 880.0L1514.8 873.6L1523.9 868.2L1533.5 863.8" fill="none" stroke="#00008b" stroke-width="4.400"/>
<path d="M1858.4 1289.0L1848.0 1292.6L1837.2 1295.1L1826.1 1296.6L1814.7 1297.0L1803.0 1296.3L1791.2 1294.5L1779.2 1291.6L1767.2 1287.7L1755.1 1282.8L1743.0 1276.8L1731.0 1269.8L1719.1 1261.9L1707.4 1253.0L1695.9 1243.2L1684.7 1232.6L1673.9 1221.2L1663.3 1209.0L1653.2 1196.1L1643.6 1182.6L1634.4 1168.5L1625.8 1153.8L1617.7 1138.7L1610.3 1123.1L1603.5 1107.3L1597.4 1091.1L1591.9 1074.8L1587.2 1058.3L1583.2 1041.8L1580.0 1025.2L1577.5 1008.8L1575.8 992.5L1575.0 976.4L1574.9 960.6L1575.5 945.2L1577.0 930.2L1579.3 915.7L1582.3 901.8L1586.1 888.4L1590.6 875.7L1595.9 863.8L1601.8 852.6L1608.5 842.2L1615.7 832.7L1623.6 824.1L1632.1 816.4L1641.1 809.8L1650.7 804.1L1660.6 799.4" fill="none" stroke="#00008b" stroke-width="2"/>
<path d="M1853.9 1277.9L1844.0 1281.3L1833.7 1283.7L1823.1 1285.1L1812.2 1285.5L1801.1 1284.8L1789.8 1283.1L1778.3 1280.4L1766.8 1276.7L1755.3 1271.9L1743.8 1266.2L1732.3 1259.6L1721.0 1252.0L1709.8 1243.5L1698.8 1234.2L1688.1 1224.1L1677.7 1213.2L1667.7 1201.5L1658.1 1189.2L1648.8 1176.3L1640.1 1162.8L1631.9 1148.8L1624.2 1134.4L1617.1 1119.6L1610.6 1104.4L1604.7 1089.0L1599.5 1073.4L1595.0 1057.7L1591.2 1041.9L1588.2 1026.1L1585.8 1010.4L1584.2 994.9L1583.3 979.5L1583.2 964.4L1583.9 949.7L1585.3 935.4L1587.5 921.6L1590.4 908.2L1594.0 895.5L1598.3 883.4L1603.3 872.0L1609.0 861.3L1615.3 851.4L1622.3 842.3L1629.8 834.1L1637.9 826.8L1646.5 820.4L1655.6 815.0L1665.1 810.6" fill="none" stroke="#00008b" stroke-width="4.400"/>
<path d="M1864.1 1273.7L1854.2 1277.2L1843.9 1279.6L1833.3 1281.0L1822.4 1281.4L1811.3 1280.7L1800.0 1279.0L1788.5 1276.3L1777.0 1272.5L1765.5 1267.8L1754.0 1262.1L1742.5 1255.4L1731.2 1247.9L1720.0 1239.4L1709.0 1230.1L1698.3 1219.9L1687.9 1209.0L1677.9 1197.4L1668.3 1185.1L1659.0 1172.2L1650.3 1158.7L1642.1 1144.7L1634.4 1130.3L1627.3 1115.4L1620.8 1100.3L1614.9 1084.9L1609.7 1069.3L1605.2 1053.5L1601.4 1037.8L1598.4 1022.0L1596.0 1006.3L1594.4 990.7L1593.5 975.4L1593.4 960.3L1594.1 945.6L1595.5 931.3L1597.7 917.4L1600.6 904.1L1604.2 891.4L1608.5 879.3L1613.5 867.8L1619.2 857.2L1625.5 847.3L1632.5 838.2L1640.0 830.0L1648.1 822.7L1656.7 816.3L1665.8 810.9L1675.3 806.4" fill="none" stroke="#00008b" stroke-width="4.400"/>
</g>
<path d="M1688.2 1073.1L1695.8 1093.6L1702.2 1114.4L1707.4 1135.3L1711.4 1156.3L1714.0 1177.0L1715.3 1197.5L1715.3 1217.4L1713.9 1236.7L1711.2 1255.2L1707.2 1272.7L1701.9 1289.3L1695.4 1304.6L1687.7 1318.6L1678.9 1331.2L1669.0 1342.3L1658.2 1351.8L1646.4 1359.6L1633.8 1365.7L1620.5 1370.1L1606.6 1372.6L1592.2 1373.3L1577.4 1372.2L1562.3 1369.3L1547.0 1364.5L1531.7 1358.0L1516.5 1349.8L1501.4 1339.9L1486.6 1328.5L1472.2 1315.6L1458.3 1301.3L1445.1 1285.7L1432.5 1268.9L1420.8 1251.1L1410.0 1232.4L1400.2 1213.0L1391.4 1192.9L1383.8 1172.4L1377.4 1151.6L1372.2 1130.7L1368.2 1109.7L1365.6 1089.0L1364.3 1068.5L1364.3 1048.6L1365.7 1029.3L1368.4 1010.8L1372.4 993.3L1377.7 976.7L1384.2 961.4L1391.9 947.4L1400.7 934.8L1410.6 923.7L1421.4 914.2L1433.2 906.4L1445.8 900.3L1459.1 895.9L1473.0 893.4L1487.4 892.7L1502.2 893.8L1517.3 896.7L1532.6 901.5L1547.9 908.0L1563.1 916.2L1578.2 926.1L1593.0 937.5L1607.4 950.4L1621.3 964.7L1634.5 980.3L1647.1 997.1L1658.8 1014.9L1669.6 1033.6L1679.4 1053.0L1688.2 1073.1Z" fill="none" stroke="#00008b" stroke-width="4"/></g>
<path d="M1695.8 1070.0L1703.9 1091.5L1710.6 1113.4L1716.1 1135.5L1720.3 1157.5L1723.0 1179.3L1724.4 1200.8L1724.3 1221.8L1722.9 1242.0L1720.1 1261.5L1715.9 1280.0L1710.3 1297.3L1703.5 1313.5L1695.4 1328.2L1686.1 1341.5L1675.7 1353.1L1664.3 1363.1L1651.9 1371.4L1638.7 1377.8L1624.7 1382.3L1610.1 1385.0L1594.9 1385.8L1579.4 1384.6L1563.5 1381.5L1547.4 1376.5L1531.3 1369.7L1515.3 1361.0L1499.4 1350.7L1483.8 1338.6L1468.7 1325.0L1454.1 1310.0L1440.2 1293.6L1427.0 1276.0L1414.7 1257.3L1403.3 1237.6L1393.0 1217.1L1383.8 1196.0L1375.7 1174.5L1369.0 1152.6L1363.5 1130.5L1359.3 1108.5L1356.6 1086.7L1355.2 1065.2L1355.3 1044.2L1356.7 1024.0L1359.5 1004.5L1363.7 986.0L1369.3 968.7L1376.1 952.5L1384.2 937.8L1393.5 924.5L1403.9 912.9L1415.3 902.9L1427.7 894.6L1440.9 888.2L1454.9 883.7L1469.5 881.0L1484.7 880.2L1500.2 881.4L1516.1 884.5L1532.2 889.5L1548.3 896.3L1564.3 905.0L1580.2 915.3L1595.8 927.4L1610.9 941.0L1625.5 956.0L1639.4 972.4L1652.6 990.0L1664.9 1008.7L1676.3 1028.4L1686.6 1048.9L1695.8 1070.0Z" fill="none" stroke="#00008b" stroke-width="4.400"/>
</svg>
<svg style="left:895px;top:697px;" width="40" height="568" viewBox="0 0 40 568"><rect x="0" y="0.00" width="40" height="63.61" fill="#ff0000"/><rect x="0" y="63.11" width="40" height="63.61" fill="#ffa500"/><rect x="0" y="126.22" width="40" height="63.61" fill="#ffff00"/><rect x="0" y="189.33" width="40" height="63.61" fill="#aaff00"/><rect x="0" y="252.44" width="40" height="63.61" fill="#00ff00"/><rect x="0" y="315.56" width="40" height="63.61" fill="#00ff9c"/><rect x="0" y="378.67" width="40" height="63.61" fill="#00ffff"/><rect x="0" y="441.78" width="40" height="63.61" fill="#00a5ff"/><rect x="0" y="504.89" width="40" height="63.11" fill="#0000ff"/></svg>
<svg style="left:878px;top:684px;" width="18" height="26" viewBox="0 0 18 26"><path d="M1 2.500l15.500 10.500l-15.500 10.500z" fill="#ff0000"/></svg>
<svg style="left:878px;top:1252px;" width="18" height="26" viewBox="0 0 18 26"><path d="M1 2.500l15.500 10.500l-15.500 10.500z" fill="#0000ff"/></svg>
<span class="t" style="left:945.50px;top:676.31px;font-size:27px;color:#0a0a0a;font-weight:700;letter-spacing:0.653px;">1.1642e-05</span>
<span class="t" style="left:945.50px;top:739.42px;font-size:27px;color:#0a0a0a;font-weight:700;letter-spacing:0.653px;">9.0489e-06</span>
<span class="t" style="left:945.50px;top:802.53px;font-size:27px;color:#0a0a0a;font-weight:700;letter-spacing:0.653px;">6.4556e-06</span>
<span class="t" style="left:945.50px;top:865.64px;font-size:27px;color:#0a0a0a;font-weight:700;letter-spacing:0.653px;">3.8622e-06</span>
<span class="t" style="left:945.50px;top:928.75px;font-size:27px;color:#0a0a0a;font-weight:700;letter-spacing:0.653px;">1.2689e-06</span>
<span class="t" style="left:945.50px;top:991.87px;font-size:27px;color:#0a0a0a;font-weight:700;letter-spacing:0.688px;">-1.3245e-06</span>
<span class="t" style="left:945.50px;top:1054.98px;font-size:27px;color:#0a0a0a;font-weight:700;letter-spacing:0.688px;">-3.9178e-06</span>
<span class="t" style="left:945.50px;top:1118.09px;font-size:27px;color:#0a0a0a;font-weight:700;letter-spacing:0.838px;">-6.5112e-06</span>
<span class="t" style="left:945.50px;top:1181.20px;font-size:27px;color:#0a0a0a;font-weight:700;letter-spacing:0.688px;">-9.1045e-06</span>
<span class="t" style="left:945.50px;top:1244.31px;font-size:27px;color:#0a0a0a;font-weight:700;letter-spacing:0.688px;">-1.1698e-05</span>
<svg style="left:2480px;top:400px" width="159.2" height="180" viewBox="0 0 600.0 678.3">
<defs>
<radialGradient id="lgO" cx=".5" cy=".45" r=".6"><stop offset="0" stop-color="#ffc400"/><stop offset=".5" stop-color="#ffa008"/><stop offset=".82" stop-color="#f4640c"/><stop offset="1" stop-color="#c8300c"/></radialGradient>
<radialGradient id="lgG" cx=".5" cy=".45" r=".6"><stop offset="0" stop-color="#50ff10"/><stop offset=".6" stop-color="#28f818"/><stop offset=".86" stop-color="#18d030"/><stop offset="1" stop-color="#208048"/></radialGradient>
<filter id="lgB" x="-10%" y="-10%" width="120%" height="120%"><feGaussianBlur stdDeviation="3.4"/></filter>
</defs>
<g filter="url(#lgB)">
<path d="M325 100L515 208L515 415L322 540L138 418L134 212Z" fill="#b9cf2a" opacity=".85"/>
<path d="M134 212L322 322L322 540L138 418Z" fill="#c8d026" opacity=".8"/>
<path d="M322 322L515 208L515 415L322 540Z" fill="#7fd028" opacity=".8"/>
<path d="M325 100L515 208L322 322L134 212Z" fill="#a8d830" opacity=".8"/>
<path d="M322 322V552M122 205L322 322L528 200M225 143L425 262M425 140L222 262M222 262V490M425 262V486M125 315L322 437L528 310" stroke="#c2461a" stroke-width="4" fill="none" opacity=".6"/>
<ellipse cx="170" cy="282" rx="64" ry="35" transform="rotate(58 170 282)" fill="url(#lgO)" stroke="#c03a0c" stroke-width="4"/>
<ellipse cx="268" cy="356" rx="64" ry="35" transform="rotate(58 268 356)" fill="url(#lgO)" stroke="#c03a0c" stroke-width="4"/>
<ellipse cx="176" cy="404" rx="64" ry="35" transform="rotate(58 176 404)" fill="url(#lgO)" stroke="#c03a0c" stroke-width="4"/>
<ellipse cx="270" cy="468" rx="64" ry="35" transform="rotate(58 270 468)" fill="url(#lgO)" stroke="#c03a0c" stroke-width="4"/>
<ellipse cx="482" cy="288" rx="64" ry="36" transform="rotate(-58 482 288)" fill="url(#lgG)" stroke="#1e8a40" stroke-width="4"/>
<ellipse cx="372" cy="356" rx="64" ry="36" transform="rotate(-58 372 356)" fill="url(#lgG)" stroke="#1e8a40" stroke-width="4"/>
<ellipse cx="472" cy="400" rx="64" ry="36" transform="rotate(-58 472 400)" fill="url(#lgG)" stroke="#1e8a40" stroke-width="4"/>
<ellipse cx="372" cy="468" rx="64" ry="36" transform="rotate(-58 372 468)" fill="url(#lgG)" stroke="#1e8a40" stroke-width="4"/>
<ellipse cx="330" cy="140" rx="65" ry="36" transform="rotate(3 330 140)" fill="url(#lgO)" stroke="#c03a0c" stroke-width="4"/>
<ellipse cx="222" cy="196" rx="65" ry="36" transform="rotate(3 222 196)" fill="url(#lgO)" stroke="#c03a0c" stroke-width="4"/>
<ellipse cx="434" cy="202" rx="65" ry="36" transform="rotate(3 434 202)" fill="url(#lgO)" stroke="#c03a0c" stroke-width="4"/>
<ellipse cx="322" cy="262" rx="65" ry="36" transform="rotate(3 322 262)" fill="url(#lgO)" stroke="#c03a0c" stroke-width="4"/>
</g>
</svg>
<div style="left:2629px;top:429px;width:6.5px;height:114px;background:#fff;border-radius:1px;"></div>
<span class="t" style="left:2649.30px;top:466.61px;font-size:53px;color:#fff;font-weight:700;letter-spacing:2.604px;line-height:80px;height:80px;margin-top:-20px;-webkit-text-stroke:1.600px #fff;text-shadow:0 0 2px rgba(255,255,255,.45);">Манипула-КМ.3</span>
<svg style="left:2920px;top:1420px;" width="130" height="120" viewBox="0 0 130 120"><path d="M78.100 15.800l-40.500 12l-8.700 13.600l9.200 1.300l34.100-15.100l8-2z" fill="#0cf20c"/><path d="M43.400 25.200l5.500-2.200l0.800 2.100l-5.500 2.200zM48.600 37l5.500-2.200l0.800 2.100l-5.500 2.200z" fill="#5a6ae0"/><path d="M71.600 25.600l8.500-7.900l17.100 46l5.200-2l-1.700 22.300l-18-15.100l5.300-1.900z" fill="#fa7a5c"/></svg>
<span class="t" style="left:2927.96px;top:1444.70px;font-size:17.5px;color:#000;font-weight:700;font-family:'DejaVu Sans', sans-serif;transform:scaleX(1.25);">Y</span>
<span class="t" style="left:2940.15px;top:1440.50px;font-size:17.5px;color:#000;font-weight:700;font-family:'DejaVu Sans', sans-serif;transform:scaleX(1.3);">Z</span>
<span class="t" style="left:3018.95px;top:1497.60px;font-size:17.5px;color:#000;font-weight:700;font-family:'DejaVu Sans', sans-serif;transform:scaleX(1.25);">X</span>
<!-- 40_bottom.py -->
<span class="t" style="left:32.00px;top:1586.96px;font-size:22.6px;color:#1979c0;letter-spacing:0.672px;">Вывод</span>
<svg style="left:137.7px;top:1597.7px;" width="18.6" height="18.6" viewBox="0 0 18.6 18.6"><path d="M2 2l14.6 14.6M16.6 2l-14.6 14.6" stroke="#333" stroke-width="1.8" fill="none"/></svg>
<span class="t" style="left:208.50px;top:1586.96px;font-size:22.6px;color:#1979c0;letter-spacing:0.598px;">Управление отображением результата "Перемещение по OX"</span>
<div style="left:907px;top:1581px;width:236px;height:50px;background:#0078ce;border-radius:4px;"></div>
<span class="t" style="left:925.00px;top:1586.96px;font-size:22.6px;color:#fff;letter-spacing:0.506px;">Выделенные узлы</span>
<svg style="left:2997px;top:1599.8px;" width="24" height="14" viewBox="0 0 24 14"><use href="#icoTri"/></svg><svg style="left:3035.3px;top:1593.5px;" width="24" height="24" viewBox="0 0 24 24"><use href="#icoRest" stroke="#3a3a3a"/></svg><svg style="left:3075.5px;top:1590.5px;" width="20" height="28" viewBox="0 0 20 28"><use href="#icoPin" stroke="#3a3a3a"/></svg>
<div style="left:15px;top:1636px;width:3091px;height:285px;background:#fafafa;border:2px solid #a3a3a3;"></div>
<div style="left:15px;top:1635px;width:3091px;height:62px;background:#e6e6e6;border:4px solid #a3a3a3;border-bottom-width:2px;border-left-width:3px;border-right-width:3px;"></div>
<span class="t" style="left:110.16px;top:1648.56px;font-size:22.6px;color:#000;font-weight:700;">X</span>
<div style="left:216.5px;top:1638px;width:2.5px;height:57px;background:#a3a3a3;"></div>
<span class="t" style="left:310.16px;top:1648.56px;font-size:22.6px;color:#000;font-weight:700;">Y</span>
<div style="left:416.5px;top:1638px;width:2.5px;height:57px;background:#a3a3a3;"></div>
<span class="t" style="left:510.79px;top:1648.56px;font-size:22.6px;color:#000;font-weight:700;">Z</span>
<div style="left:616.5px;top:1638px;width:2.5px;height:57px;background:#a3a3a3;"></div>
<span class="t" style="left:652.45px;top:1648.56px;font-size:22.6px;color:#000;font-weight:700;letter-spacing:0.134px;">Номер узла</span>
<div style="left:816.5px;top:1638px;width:2.5px;height:57px;background:#a3a3a3;"></div>
<span class="t" style="left:864.45px;top:1648.56px;font-size:22.6px;color:#000;font-weight:700;letter-spacing:0.129px;">Значение</span>
<div style="left:1016.5px;top:1638px;width:2.5px;height:57px;background:#a3a3a3;"></div>
</div>
</body></html>
